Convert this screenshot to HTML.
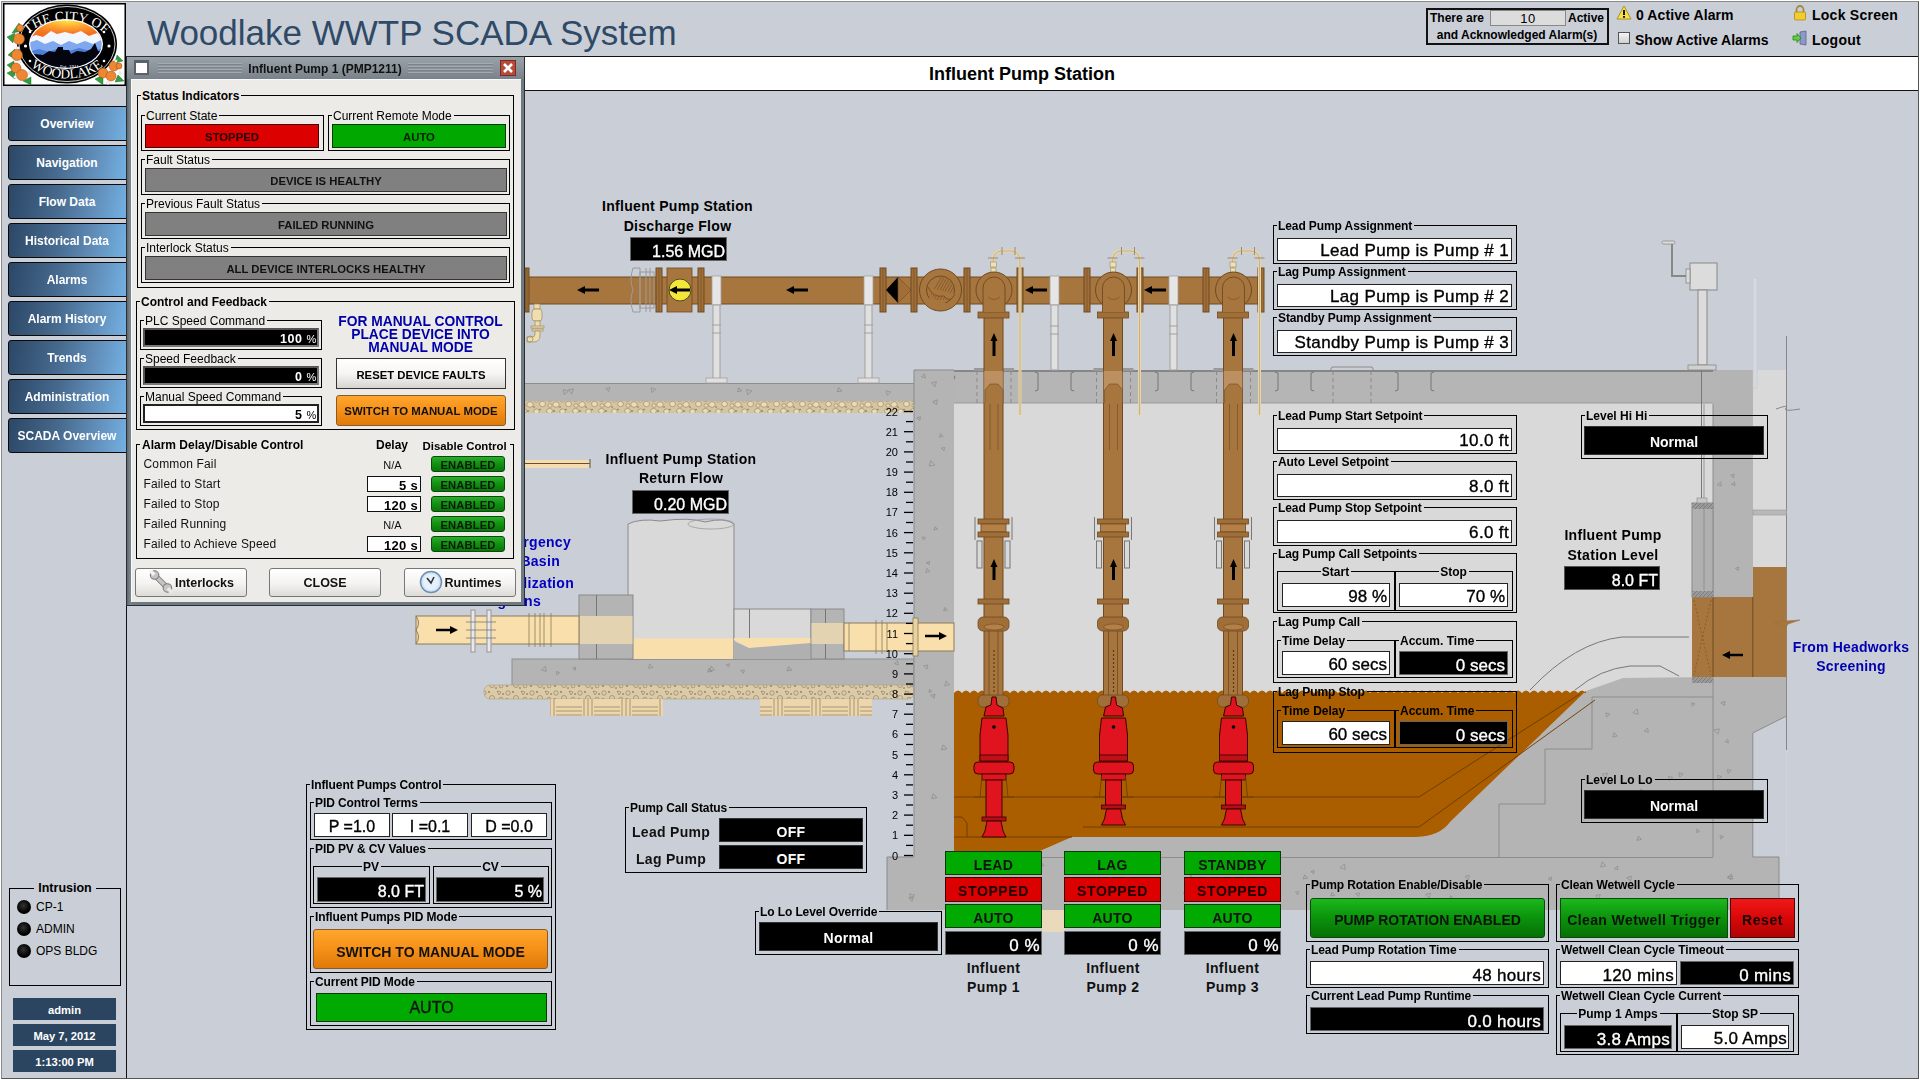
<!DOCTYPE html>
<html><head><meta charset="utf-8"><style>
html,body{margin:0;padding:0;}
body{width:1920px;height:1080px;position:relative;overflow:hidden;background:#ffffff;font-family:"Liberation Sans", sans-serif;}
.a{position:absolute;}
.t{position:absolute;white-space:pre;}
</style></head><body>
<div class="a" style="left:1px;top:1px;width:1918px;height:1078px;background:#CACFD7;box-sizing:border-box;border-left:1px solid #8a8a8a;border-top:1px solid #8a8a8a;border-right:1px solid #555;border-bottom:1px solid #555"></div><svg class="a" style="left:0;top:0" width="1920" height="1080" viewBox="0 0 1920 1080"><rect x="525" y="383" width="389" height="18" fill="#B4B4B4"/><line x1="525" y1="383.5" x2="914" y2="383.5" stroke="#8E8E8E" stroke-width="1"/><g fill="none" stroke="#7a7a7a" stroke-width="0.6" opacity="0.8"><polygon points="651.1,387.9 655.7,389.3 652.0,392.5" transform="rotate(0 651.1 387.9)"/><polygon points="838.6,387.6 843.1,388.9 839.5,392.0" transform="rotate(30 838.6 387.6)"/><polygon points="609.9,387.5 614.0,388.7 610.8,391.6" transform="rotate(90 609.9 387.5)"/><polygon points="563.2,389.5 568.3,391.1 564.2,394.6" transform="rotate(0 563.2 389.5)"/><polygon points="886.2,390.8 890.6,392.1 887.1,395.2" transform="rotate(0 886.2 390.8)"/><polygon points="746.6,389.4 752.0,391.0 747.7,394.8" transform="rotate(0 746.6 389.4)"/><polygon points="738.9,387.8 742.9,389.0 739.7,391.8" transform="rotate(30 738.9 387.8)"/><polygon points="573.4,388.9 578.4,390.4 574.4,393.9" transform="rotate(90 573.4 388.9)"/></g><defs><pattern id="grav" width="26" height="12" patternUnits="userSpaceOnUse"><rect width="26" height="12" fill="#D6C5A2"/><g fill="#EADBB9" stroke="#8f7f5e" stroke-width="0.6"><ellipse cx="3.5" cy="3" rx="3" ry="2.5"/><ellipse cx="10" cy="8.5" rx="3.2" ry="2.8"/><ellipse cx="16.5" cy="3.5" rx="2.8" ry="2.6"/><ellipse cx="22.5" cy="8" rx="3" ry="2.7"/><ellipse cx="4" cy="9.5" rx="2" ry="1.8"/></g><g fill="#6a5a40"><circle cx="8" cy="3" r="0.8"/><circle cx="20" cy="1.5" r="0.7"/><circle cx="14" cy="11" r="0.7"/></g></pattern><pattern id="grav2" width="24" height="13" patternUnits="userSpaceOnUse"><rect width="24" height="13" fill="#DCCBA9"/><g fill="none" stroke="#8a7a5a" stroke-width="0.6"><circle cx="4" cy="4" r="2.2"/><circle cx="12" cy="9" r="2.5"/><polygon points="17,2 21,3 19,6"/><circle cx="21" cy="10" r="1.8"/></g><g fill="#5a4a30"><circle cx="9" cy="3" r="0.8"/><circle cx="3" cy="10" r="0.8"/><circle cx="16" cy="12" r="0.7"/><circle cx="23" cy="5" r="0.7"/></g></pattern><pattern id="timb" width="38" height="18" patternUnits="userSpaceOnUse"><rect width="38" height="18" fill="#EBD6AE"/><g stroke="#9a8560" stroke-width="0.8"><line x1="0" y1="5" x2="12" y2="5"/><line x1="0" y1="9" x2="12" y2="9"/><line x1="0" y1="13" x2="12" y2="13"/><line x1="14" y1="0" x2="14" y2="18"/><line x1="18" y1="0" x2="18" y2="18"/><line x1="22" y1="0" x2="22" y2="18"/><line x1="24" y1="5" x2="38" y2="5"/><line x1="24" y1="9" x2="38" y2="9"/><line x1="24" y1="13" x2="38" y2="13"/></g></pattern><pattern id="hatch" width="4" height="4" patternUnits="userSpaceOnUse"><rect width="4" height="4" fill="#9a9a9a"/><path d="M0,4 L4,0" stroke="#666" stroke-width="0.6"/></pattern></defs><rect x="525" y="401" width="389" height="12" fill="url(#grav)"/><rect x="525" y="460" width="65" height="8" fill="#F3DDB0"/><line x1="525" y1="463.5" x2="590" y2="463.5" stroke="#6a5028" stroke-width="1.2"/><line x1="590" y1="459" x2="590" y2="468" stroke="#666" stroke-width="1.2"/><rect x="512" y="659" width="402" height="27" fill="#B4B4B4" stroke="#8E8E8E" stroke-width="1"/><g fill="none" stroke="#7a7a7a" stroke-width="0.6" opacity="0.8"><polygon points="556.2,671.6 559.7,672.6 556.9,675.0" transform="rotate(0 556.2 671.6)"/><polygon points="729.6,663.9 732.8,664.9 730.3,667.1" transform="rotate(90 729.6 663.9)"/><polygon points="709.6,671.0 714.5,672.5 710.6,675.9" transform="rotate(270 709.6 671.0)"/><polygon points="744.4,669.8 748.1,670.9 745.1,673.5" transform="rotate(90 744.4 669.8)"/><polygon points="788.6,666.7 793.0,668.0 789.5,671.1" transform="rotate(30 788.6 666.7)"/><polygon points="709.1,668.2 713.2,669.4 709.9,672.3" transform="rotate(30 709.1 668.2)"/><polygon points="898.3,664.8 902.3,666.0 899.1,668.8" transform="rotate(180 898.3 664.8)"/><polygon points="575.3,670.3 578.4,671.3 575.9,673.4" transform="rotate(200 575.3 670.3)"/><polygon points="546.3,671.4 551.2,672.9 547.3,676.3" transform="rotate(180 546.3 671.4)"/><polygon points="648.6,668.3 652.9,669.5 649.5,672.5" transform="rotate(270 648.6 668.3)"/></g><rect x="484" y="685" width="430" height="14" rx="6" fill="url(#grav2)" stroke="#b0a080" stroke-width="0.6"/><rect x="550" y="699" width="113" height="17" fill="url(#timb)"/><rect x="760" y="699" width="112" height="17" fill="url(#timb)"/><path d="M628,524 Q640,518 660,521 Q690,517 705,522 Q725,517 734,524 L734,659 L628,659 Z" fill="#D9D9D9" stroke="#8a8a8a" stroke-width="1"/><ellipse cx="711" cy="524" rx="23" ry="5" fill="none" stroke="#9a9a9a" stroke-width="0.8"/><rect x="628.5" y="638.5" width="105" height="20.5" fill="#F9DFAC"/><rect x="734" y="609" width="77" height="50" fill="#D9D9D9" stroke="#8a8a8a" stroke-width="1"/><line x1="749.5" y1="609" x2="749.5" y2="646" stroke="#777" stroke-width="1"/><polygon points="734,638 811,638 811,643 749,648 734,640" fill="#F9DFAC"/><polygon points="734,641 749,648 811,643 811,659 734,659" fill="#B0B0B0"/><rect x="579" y="595" width="54" height="64" fill="#B4B4B4" stroke="#8a8a8a" stroke-width="1"/><line x1="596.5" y1="595" x2="596.5" y2="659" stroke="#777" stroke-width="1"/><rect x="579.5" y="616" width="53" height="28" fill="#E4D3B0"/><rect x="811" y="609" width="33" height="50" fill="#B4B4B4" stroke="#8a8a8a" stroke-width="1"/><line x1="825.5" y1="609" x2="825.5" y2="659" stroke="#777" stroke-width="1"/><rect x="811.5" y="623" width="32" height="21" fill="#E4D3B0"/><rect x="416" y="616" width="163" height="28" fill="#F9DFAC" stroke="#8a7a5a" stroke-width="1"/><path d="M416,616 Q421,623 416,630 Q421,637 416,644" fill="none" stroke="#8a7a5a" stroke-width="1"/><g stroke="#a0a0a0" stroke-width="1.2" fill="#e8e8e8"><rect x="471" y="610" width="4" height="42"/><rect x="487" y="610" width="4" height="42"/></g><g stroke="#777" stroke-width="0.8"><line x1="466" y1="622" x2="496" y2="622"/><line x1="466" y1="630" x2="496" y2="630"/><line x1="466" y1="638" x2="496" y2="638"/></g><g stroke="#8a7a5a" stroke-width="0.8"><line x1="529" y1="613" x2="529" y2="647"/><line x1="535" y1="613" x2="535" y2="647"/><line x1="540" y1="613" x2="540" y2="647"/><line x1="544" y1="613" x2="544" y2="647"/><line x1="551" y1="613" x2="551" y2="647"/></g><line x1="436" y1="630" x2="450" y2="630" stroke="#000" stroke-width="2.5"/><polygon points="458,630 450,626 450,634" fill="#000"/><rect x="844" y="623" width="110" height="28" fill="#F9DFAC" stroke="#8a7a5a" stroke-width="1"/><g stroke="#8a7a5a" stroke-width="0.8"><line x1="849" y1="623" x2="849" y2="651"/><line x1="876" y1="620" x2="876" y2="654"/><line x1="882" y1="620" x2="882" y2="654"/><line x1="887" y1="623" x2="887" y2="651"/></g><rect x="954" y="403" width="759" height="454" fill="#D9D9D9"/><rect x="1752" y="370" width="35" height="487" fill="#D9D9D9"/><rect x="954" y="370" width="759" height="33" fill="#B5B5B5"/><line x1="954" y1="371" x2="1713" y2="371" stroke="#777" stroke-width="1.5"/><line x1="954" y1="403" x2="1713" y2="403" stroke="#999" stroke-width="1"/><g fill="none" stroke="#7a7a7a" stroke-width="0.6" opacity="0.8"></g><g fill="none" stroke="#777" stroke-width="1"><path d="M1035,372 L1038,373 L1038,390 L1035,391"/><path d="M1074,372 L1071,373 L1071,390 L1074,391"/><path d="M1155,372 L1158,373 L1158,390 L1155,391"/><path d="M1194,372 L1191,373 L1191,390 L1194,391"/><path d="M1275,372 L1278,373 L1278,390 L1275,391"/><path d="M1314,372 L1311,373 L1311,390 L1314,391"/><path d="M1395,372 L1398,373 L1398,390 L1395,391"/><path d="M1434,372 L1431,373 L1431,390 L1434,391"/><path d="M952,373 L955,377 L951,385 L945,381"/><path d="M1714,373 L1716,377 L1722,386 L1728,381"/></g><g stroke="#8a8a8a" stroke-width="1" stroke-dasharray="4,3"><line x1="977" y1="371" x2="977" y2="403"/><line x1="1011" y1="371" x2="1011" y2="403"/><line x1="1096.5" y1="371" x2="1096.5" y2="403"/><line x1="1130.5" y1="371" x2="1130.5" y2="403"/><line x1="1216.5" y1="371" x2="1216.5" y2="403"/><line x1="1250.5" y1="371" x2="1250.5" y2="403"/></g><g fill="#999"><rect x="974" y="368" width="40" height="3"/><rect x="1093.5" y="368" width="40" height="3"/><rect x="1213.5" y="368" width="40" height="3"/></g><g stroke="#8a8a8a" stroke-width="1" fill="none"><path d="M1330,371 L1332,367 L1372,367 L1374,371"/><line x1="1333" y1="371" x2="1333" y2="403" stroke-dasharray="4,3"/><line x1="1371" y1="371" x2="1371" y2="403" stroke-dasharray="4,3"/></g><polygon points="914,370 954,370 954,851 1040,851 1072,837 1416,837 1450,822 1586,691 1623,678 1713,677 1786.5,677 1786.5,716 1752.8,733 1752.8,857 1779,857 1779,910 887,910 887,857 914,857" fill="#B4B4B4"/><rect x="1713" y="370" width="40" height="227" fill="#B4B4B4"/><polyline points="914,857 914,370 954,370" fill="none" stroke="#8a8a8a" stroke-width="1"/><polyline points="887,910 887,857 914,857" fill="none" stroke="#8a8a8a" stroke-width="1"/><g fill="none" stroke="#7a7a7a" stroke-width="0.6" opacity="0.8"><polygon points="919.9,420.3 923.6,421.4 920.7,423.9" transform="rotate(200 919.9 420.3)"/><polygon points="936.6,404.7 941.3,406.1 937.5,409.5" transform="rotate(200 936.6 404.7)"/><polygon points="934.2,698.2 938.3,699.5 935.0,702.3" transform="rotate(200 934.2 698.2)"/><polygon points="928.8,692.3 931.9,693.2 929.4,695.3" transform="rotate(270 928.8 692.3)"/><polygon points="928.0,665.0 932.2,666.2 928.8,669.2" transform="rotate(90 928.0 665.0)"/><polygon points="939.5,437.2 943.1,438.3 940.2,440.8" transform="rotate(270 939.5 437.2)"/><polygon points="943.7,610.8 947.1,611.9 944.4,614.3" transform="rotate(270 943.7 610.8)"/><polygon points="933.4,793.8 938.4,795.4 934.4,798.9" transform="rotate(30 933.4 793.8)"/><polygon points="925.8,572.4 929.7,573.6 926.6,576.3" transform="rotate(270 925.8 572.4)"/><polygon points="944.8,447.4 948.3,448.4 945.5,450.8" transform="rotate(90 944.8 447.4)"/><polygon points="936.4,381.7 941.5,383.2 937.5,386.8" transform="rotate(90 936.4 381.7)"/><polygon points="925.4,377.9 929.4,379.2 926.2,382.0" transform="rotate(180 925.4 377.9)"/><polygon points="935.1,526.7 938.4,527.7 935.7,530.0" transform="rotate(30 935.1 526.7)"/><polygon points="944.6,685.8 949.5,687.3 945.6,690.6" transform="rotate(270 944.6 685.8)"/><polygon points="943.2,744.9 948.4,746.5 944.2,750.1" transform="rotate(30 943.2 744.9)"/><polygon points="929.0,564.7 932.2,565.7 929.6,568.0" transform="rotate(200 929.0 564.7)"/><polygon points="929.2,466.2 934.7,467.8 930.3,471.6" transform="rotate(270 929.2 466.2)"/><polygon points="922.5,536.8 925.7,537.8 923.2,540.0" transform="rotate(0 922.5 536.8)"/></g><g fill="none" stroke="#7a7a7a" stroke-width="0.6" opacity="0.8"><polygon points="1389.8,883.0 1395.1,884.6 1390.8,888.4" transform="rotate(30 1389.8 883.0)"/><polygon points="913.4,896.8 918.0,898.2 914.3,901.4" transform="rotate(90 913.4 896.8)"/><polygon points="1449.3,900.2 1453.8,901.5 1450.2,904.7" transform="rotate(270 1449.3 900.2)"/><polygon points="999.1,895.8 1004.6,897.5 1000.2,901.3" transform="rotate(270 999.1 895.8)"/><polygon points="1313.7,873.8 1317.1,874.8 1314.4,877.1" transform="rotate(200 1313.7 873.8)"/><polygon points="1192.5,871.9 1197.6,873.4 1193.5,876.9" transform="rotate(90 1192.5 871.9)"/><polygon points="1345.4,869.4 1350.8,871.0 1346.5,874.8" transform="rotate(180 1345.4 869.4)"/><polygon points="1020.0,883.3 1023.1,884.2 1020.6,886.3" transform="rotate(30 1020.0 883.3)"/><polygon points="1153.3,887.4 1156.5,888.3 1154.0,890.6" transform="rotate(180 1153.3 887.4)"/><polygon points="1347.2,898.2 1351.1,899.4 1348.0,902.1" transform="rotate(90 1347.2 898.2)"/><polygon points="1359.7,892.9 1363.5,894.1 1360.4,896.8" transform="rotate(90 1359.7 892.9)"/><polygon points="1430.6,893.3 1435.5,894.8 1431.6,898.2" transform="rotate(90 1430.6 893.3)"/><polygon points="1600.3,894.6 1605.2,896.0 1601.3,899.4" transform="rotate(90 1600.3 894.6)"/><polygon points="1066.9,881.2 1071.8,882.7 1067.9,886.0" transform="rotate(0 1066.9 881.2)"/><polygon points="1586.3,880.4 1589.8,881.4 1587.0,883.8" transform="rotate(30 1586.3 880.4)"/><polygon points="1732.7,879.3 1738.1,880.9 1733.8,884.7" transform="rotate(180 1732.7 879.3)"/><polygon points="1731.4,876.0 1735.0,877.0 1732.1,879.5" transform="rotate(90 1731.4 876.0)"/><polygon points="1304.7,874.8 1308.9,876.1 1305.5,879.1" transform="rotate(30 1304.7 874.8)"/><polygon points="1630.6,880.7 1635.2,882.0 1631.5,885.3" transform="rotate(200 1630.6 880.7)"/><polygon points="965.6,888.1 970.9,889.7 966.7,893.4" transform="rotate(200 965.6 888.1)"/><polygon points="1551.1,880.6 1554.6,881.6 1551.8,884.0" transform="rotate(200 1551.1 880.6)"/><polygon points="1183.6,893.8 1189.0,895.5 1184.7,899.3" transform="rotate(270 1183.6 893.8)"/><polygon points="1298.6,891.5 1301.8,892.4 1299.2,894.7" transform="rotate(90 1298.6 891.5)"/><polygon points="1040.6,866.2 1044.0,867.2 1041.3,869.6" transform="rotate(270 1040.6 866.2)"/><polygon points="1600.7,867.0 1605.8,868.5 1601.7,872.1" transform="rotate(270 1600.7 867.0)"/><polygon points="1469.4,875.4 1473.8,876.7 1470.3,879.7" transform="rotate(90 1469.4 875.4)"/><polygon points="909.8,893.8 914.6,895.2 910.8,898.6" transform="rotate(0 909.8 893.8)"/><polygon points="1354.4,899.3 1358.5,900.5 1355.2,903.4" transform="rotate(90 1354.4 899.3)"/><polygon points="1618.0,869.7 1621.6,870.7 1618.7,873.3" transform="rotate(180 1618.0 869.7)"/><polygon points="1332.0,892.3 1335.8,893.5 1332.8,896.1" transform="rotate(30 1332.0 892.3)"/></g><g fill="none" stroke="#7a7a7a" stroke-width="0.6" opacity="0.8"><polygon points="1638.2,714.3 1643.5,715.9 1639.2,719.6" transform="rotate(180 1638.2 714.3)"/><polygon points="1693.2,796.7 1698.3,798.2 1694.2,801.7" transform="rotate(30 1693.2 796.7)"/><polygon points="1638.4,836.2 1642.6,837.5 1639.2,840.5" transform="rotate(30 1638.4 836.2)"/><polygon points="1607.5,773.1 1612.6,774.7 1608.5,778.3" transform="rotate(90 1607.5 773.1)"/><polygon points="1660.0,814.3 1663.4,815.3 1660.7,817.7" transform="rotate(90 1660.0 814.3)"/><polygon points="1644.5,806.4 1648.8,807.7 1645.3,810.8" transform="rotate(180 1644.5 806.4)"/><polygon points="1668.5,776.3 1672.7,777.5 1669.3,780.5" transform="rotate(0 1668.5 776.3)"/><polygon points="1691.6,702.8 1695.0,703.9 1692.3,706.3" transform="rotate(0 1691.6 702.8)"/><polygon points="1678.8,772.7 1683.2,774.0 1679.7,777.1" transform="rotate(0 1678.8 772.7)"/><polygon points="1641.0,788.9 1645.2,790.2 1641.8,793.2" transform="rotate(30 1641.0 788.9)"/><polygon points="1612.9,737.0 1617.2,738.2 1613.8,741.2" transform="rotate(270 1612.9 737.0)"/><polygon points="1648.4,732.4 1652.7,733.7 1649.3,736.7" transform="rotate(180 1648.4 732.4)"/><polygon points="1696.1,832.4 1699.6,833.4 1696.8,835.9" transform="rotate(270 1696.1 832.4)"/><polygon points="1605.8,712.9 1609.9,714.1 1606.6,717.0" transform="rotate(0 1605.8 712.9)"/></g><g fill="none" stroke="#7a7a7a" stroke-width="0.6" opacity="0.8"><polygon points="1735.1,485.5 1738.7,486.6 1735.8,489.1" transform="rotate(180 1735.1 485.5)"/><polygon points="1738.2,570.4 1741.6,571.4 1738.8,573.7" transform="rotate(200 1738.2 570.4)"/><polygon points="1734.4,474.3 1738.0,475.4 1735.1,477.9" transform="rotate(90 1734.4 474.3)"/><polygon points="1743.1,447.7 1748.5,449.4 1744.2,453.1" transform="rotate(270 1743.1 447.7)"/><polygon points="1740.9,437.5 1745.6,438.9 1741.8,442.1" transform="rotate(90 1740.9 437.5)"/><polygon points="1721.4,486.1 1725.6,487.4 1722.2,490.4" transform="rotate(180 1721.4 486.1)"/></g><g fill="none" stroke="#7a7a7a" stroke-width="0.6" opacity="0.8"><polygon points="1728.4,742.8 1731.6,743.8 1729.0,746.1" transform="rotate(180 1728.4 742.8)"/><polygon points="1717.5,775.4 1721.6,776.6 1718.3,779.5" transform="rotate(0 1717.5 775.4)"/><polygon points="1727.4,769.4 1731.1,770.5 1728.1,773.1" transform="rotate(0 1727.4 769.4)"/><polygon points="1720.0,835.6 1723.6,836.6 1720.8,839.1" transform="rotate(0 1720.0 835.6)"/><polygon points="1719.3,728.9 1724.5,730.4 1720.3,734.1" transform="rotate(90 1719.3 728.9)"/><polygon points="1724.3,705.4 1728.4,706.6 1725.1,709.4" transform="rotate(200 1724.3 705.4)"/></g><polygon points="1752.8,733 1786.5,716 1786.5,857 1752.8,857" fill="#CACFD7"/><polyline points="1786.5,716 1752.8,733 1752.8,857 1779,857 1779,910" fill="none" stroke="#8a8a8a" stroke-width="1"/><line x1="1786.5" y1="336" x2="1786.5" y2="750" stroke="#888" stroke-width="1"/><rect x="1753" y="510" width="33.5" height="5" fill="#B8B8B8" stroke="#999" stroke-width="0.6"/><g fill="none" stroke="#8c8c8c" stroke-width="1"><polyline points="1040,857.5 1600,857.5 1713,857.5"/><polyline points="1499,857 1499,804 1545,804 1545,749 1592,749 1592,697 1713,697"/><line x1="1713" y1="404" x2="1713" y2="857"/></g><path d="M954,693 Q958,688 962,693 Q966,688 970,693 Q974,688 978,693 Q982,688 986,693 Q990,688 994,693 Q998,688 1002,693 Q1006,688 1010,693 Q1014,688 1018,693 Q1022,688 1026,693 Q1030,688 1034,693 Q1038,688 1042,693 Q1046,688 1050,693 Q1054,688 1058,693 Q1062,688 1066,693 Q1070,688 1074,693 Q1078,688 1082,693 Q1086,688 1090,693 Q1094,688 1098,693 Q1102,688 1106,693 Q1110,688 1114,693 Q1118,688 1122,693 Q1126,688 1130,693 Q1134,688 1138,693 Q1142,688 1146,693 Q1150,688 1154,693 Q1158,688 1162,693 Q1166,688 1170,693 Q1174,688 1178,693 Q1182,688 1186,693 Q1190,688 1194,693 Q1198,688 1202,693 Q1206,688 1210,693 Q1214,688 1218,693 Q1222,688 1226,693 Q1230,688 1234,693 Q1238,688 1242,693 Q1246,688 1250,693 Q1254,688 1258,693 Q1262,688 1266,693 Q1270,688 1274,693 Q1278,688 1282,693 Q1286,688 1290,693 Q1294,688 1298,693 Q1302,688 1306,693 Q1310,688 1314,693 Q1318,688 1322,693 Q1326,688 1330,693 Q1334,688 1338,693 Q1342,688 1346,693 Q1350,688 1354,693 Q1358,688 1362,693 Q1366,688 1370,693 Q1374,688 1378,693 Q1382,688 1386,693 Q1390,688 1394,693 Q1398,688 1402,693 Q1406,688 1410,693 Q1414,688 1418,693 Q1422,688 1426,693 Q1430,688 1434,693 Q1438,688 1442,693 Q1446,688 1450,693 Q1454,688 1458,693 Q1462,688 1466,693 Q1470,688 1474,693 Q1478,688 1482,693 Q1486,688 1490,693 Q1494,688 1498,693 Q1502,688 1506,693 Q1510,688 1514,693 Q1518,688 1522,693 Q1526,688 1530,693 Q1534,688 1538,693 Q1542,688 1546,693 Q1550,688 1554,693 Q1558,688 1562,693 Q1566,688 1570,693 Q1574,688 1578,693 Q1582,688 1586,693 L1586,691 L1450,822 Q1440,836 1416,837 L1072,837 L1040,851 L954,851 Z" fill="#AA5E00"/><g fill="none" stroke="#6a3a00" stroke-width="0.9"><polyline points="954,797 1419,797 1580,694"/><polyline points="1083,827 1419,827 1595,700"/><line x1="954" y1="837" x2="1072" y2="837"/><polyline points="954,817 962,817 967,823 967,837"/></g><g fill="none" stroke="#777" stroke-width="1"><path d="M1689,637 L1622,637 Q1575,642 1530,690"/><path d="M1679,676 L1660,666 L1630,666 Q1600,669 1575,690"/></g><g stroke="#000" stroke-width="1.3"><line x1="904" y1="855.5" x2="913" y2="855.5"/><line x1="906" y1="845.4" x2="913" y2="845.4"/><line x1="904" y1="835.3" x2="913" y2="835.3"/><line x1="906" y1="825.2" x2="913" y2="825.2"/><line x1="904" y1="815.1" x2="913" y2="815.1"/><line x1="906" y1="805.0" x2="913" y2="805.0"/><line x1="904" y1="795.0" x2="913" y2="795.0"/><line x1="906" y1="784.9" x2="913" y2="784.9"/><line x1="904" y1="774.8" x2="913" y2="774.8"/><line x1="906" y1="764.7" x2="913" y2="764.7"/><line x1="904" y1="754.6" x2="913" y2="754.6"/><line x1="906" y1="744.5" x2="913" y2="744.5"/><line x1="904" y1="734.4" x2="913" y2="734.4"/><line x1="906" y1="724.3" x2="913" y2="724.3"/><line x1="904" y1="714.2" x2="913" y2="714.2"/><line x1="906" y1="704.1" x2="913" y2="704.1"/><line x1="904" y1="694.1" x2="913" y2="694.1"/><line x1="906" y1="684.0" x2="913" y2="684.0"/><line x1="904" y1="673.9" x2="913" y2="673.9"/><line x1="906" y1="663.8" x2="913" y2="663.8"/><line x1="904" y1="653.7" x2="913" y2="653.7"/><line x1="906" y1="643.6" x2="913" y2="643.6"/><line x1="904" y1="633.5" x2="913" y2="633.5"/><line x1="906" y1="623.4" x2="913" y2="623.4"/><line x1="904" y1="613.3" x2="913" y2="613.3"/><line x1="906" y1="603.2" x2="913" y2="603.2"/><line x1="904" y1="593.2" x2="913" y2="593.2"/><line x1="906" y1="583.1" x2="913" y2="583.1"/><line x1="904" y1="573.0" x2="913" y2="573.0"/><line x1="906" y1="562.9" x2="913" y2="562.9"/><line x1="904" y1="552.8" x2="913" y2="552.8"/><line x1="906" y1="542.7" x2="913" y2="542.7"/><line x1="904" y1="532.6" x2="913" y2="532.6"/><line x1="906" y1="522.5" x2="913" y2="522.5"/><line x1="904" y1="512.4" x2="913" y2="512.4"/><line x1="906" y1="502.4" x2="913" y2="502.4"/><line x1="904" y1="492.3" x2="913" y2="492.3"/><line x1="906" y1="482.2" x2="913" y2="482.2"/><line x1="904" y1="472.1" x2="913" y2="472.1"/><line x1="906" y1="462.0" x2="913" y2="462.0"/><line x1="904" y1="451.9" x2="913" y2="451.9"/><line x1="906" y1="441.8" x2="913" y2="441.8"/><line x1="904" y1="431.7" x2="913" y2="431.7"/><line x1="906" y1="421.6" x2="913" y2="421.6"/><line x1="904" y1="411.5" x2="913" y2="411.5"/></g><g font-family="Liberation Sans" font-size="11" fill="#000" text-anchor="end"><text x="898" y="859.5">0</text><text x="898" y="839.3">1</text><text x="898" y="819.1">2</text><text x="898" y="799.0">3</text><text x="898" y="778.8">4</text><text x="898" y="758.6">5</text><text x="898" y="738.4">6</text><text x="898" y="718.2">7</text><text x="898" y="698.1">8</text><text x="898" y="677.9">9</text><text x="898" y="657.7">10</text><text x="898" y="637.5">11</text><text x="898" y="617.3">12</text><text x="898" y="597.2">13</text><text x="898" y="577.0">14</text><text x="898" y="556.8">15</text><text x="898" y="536.6">16</text><text x="898" y="516.4">17</text><text x="898" y="496.3">18</text><text x="898" y="476.1">19</text><text x="898" y="455.9">20</text><text x="898" y="435.7">21</text><text x="898" y="415.5">22</text></g><rect x="914" y="623" width="40" height="28" fill="#F9DFAC" stroke="#8a7a5a" stroke-width="1"/><rect x="913" y="618" width="5" height="38" fill="#E9D2A0" stroke="#8a7a5a" stroke-width="0.8"/><line x1="925" y1="636" x2="939" y2="636" stroke="#000" stroke-width="2.5"/><polygon points="947,636 939,632 939,640" fill="#000"/><polygon points="1692,597 1753,597 1753,567 1786.5,567 1786.5,677 1692,677" fill="#A7763E"/><polyline points="1713,597 1713,677" stroke="#6e4a22" stroke-width="1" fill="none"/><polyline points="1752.8,597 1752.8,677" stroke="#6e4a22" stroke-width="1" fill="none"/><path d="M1694,600 L1711,675 M1711,600 L1694,675" stroke="#6e4a22" stroke-width="0.6" stroke-dasharray="2,2"/><line x1="1743" y1="655" x2="1730" y2="655" stroke="#000" stroke-width="2.5"/><polygon points="1722,655 1730,651 1730,659" fill="#000"/><rect x="1692" y="503" width="21" height="94" fill="#B0B0B0" stroke="#8a8a8a" stroke-width="1"/><rect x="1692" y="503" width="21" height="6" fill="url(#hatch)"/><rect x="1692" y="591" width="21" height="6" fill="url(#hatch)"/><rect x="1692" y="677" width="21" height="6" fill="url(#hatch)"/><line x1="1701.5" y1="370" x2="1701.5" y2="503" stroke="#777" stroke-width="1"/><line x1="1704" y1="404" x2="1704" y2="590" stroke="#888" stroke-width="0.8"/><rect x="1697" y="498" width="10" height="5" fill="#C8C8C8" stroke="#888" stroke-width="0.6"/><path d="M1776,409 Q1790,404 1786,408 Q1782,412 1800,409" fill="none" stroke="#888" stroke-width="1"/><path d="M1774,622 L1800,620 L1788,624 L1786,627 Z" fill="#A7763E" stroke="#9a7040" stroke-width="0.6"/><rect x="1690" y="263" width="27" height="27" fill="#DCDCDC" stroke="#888" stroke-width="1"/><rect x="1686" y="269" width="4" height="14" fill="#DCDCDC" stroke="#888" stroke-width="0.8"/><polyline points="1686,276 1672,276 1672,243" fill="none" stroke="#888" stroke-width="2"/><rect x="1662" y="241" width="13" height="3" rx="1.5" fill="#ddd" stroke="#888" stroke-width="0.8"/><rect x="1698" y="290" width="9" height="75" fill="#DCDCDC" stroke="#888" stroke-width="1"/><rect x="1688" y="365" width="28" height="5" fill="#D0D0D0" stroke="#888" stroke-width="0.8"/><rect x="1753" y="278" width="4" height="110" fill="#D6D9DE" stroke="#C2C6CC" stroke-width="0.6"/><rect x="527" y="277" width="731" height="27" fill="#A7763E" stroke="#6E4A22" stroke-width="1"/><rect x="525" y="268" width="4" height="44" fill="#A06E38" stroke="#6E4A22" stroke-width="1"/><line x1="527.0" y1="268" x2="527.0" y2="312" stroke="#6E4A22" stroke-width="0.6"/><g fill="#F0DDB0" stroke="#9a8a60" stroke-width="0.7"><rect x="534" y="304" width="6" height="5"/><rect x="532" y="309" width="10" height="12" rx="3"/><rect x="535" y="321" width="5" height="6"/><rect x="531" y="326" width="13" height="2"/><rect x="532" y="329" width="11" height="2"/><path d="M535,331 L540,331 L540,336 Q540,342 533,342 L527,342 L527,337 L532,337 Q535,337 535,334 Z"/><circle cx="530" cy="339" r="3" fill="none"/></g><line x1="599" y1="290" x2="585" y2="290" stroke="#000" stroke-width="3"/><polygon points="577,290 585,286 585,294" fill="#000"/><g fill="none" stroke="#9a9a9a" stroke-width="1"><path d="M633,268 L640,268 L640,312 L633,312 Q629,300 633,290 Q629,280 633,268"/><rect x="640" y="272" width="14" height="36"/><line x1="646" y1="268" x2="646" y2="312"/><line x1="650" y1="268" x2="650" y2="312"/></g><rect x="656" y="268" width="6" height="44" fill="#A06E38" stroke="#6E4A22" stroke-width="1"/><line x1="659.0" y1="268" x2="659.0" y2="312" stroke="#6E4A22" stroke-width="0.6"/><rect x="667" y="268" width="25" height="44" fill="#A7763E" stroke="#6E4A22" stroke-width="0.8"/><circle cx="680" cy="290" r="11" fill="#F4E63A" stroke="#4a4a20" stroke-width="1"/><line x1="690" y1="290" x2="677" y2="290" stroke="#000" stroke-width="3"/><polygon points="669,290 677,286 677,294" fill="#000"/><rect x="698" y="268" width="6" height="44" fill="#A06E38" stroke="#6E4A22" stroke-width="1"/><line x1="701.0" y1="268" x2="701.0" y2="312" stroke="#6E4A22" stroke-width="0.6"/><rect x="712" y="276" width="9" height="29" fill="#E6E6E6" stroke="#a0a0a0" stroke-width="0.8"/><rect x="713" y="305" width="7" height="74" fill="#E0E0E0" stroke="#a0a0a0" stroke-width="1"/><line x1="712" y1="325" x2="721" y2="325" stroke="#a0a0a0"/><line x1="712" y1="333" x2="721" y2="333" stroke="#a0a0a0"/><rect x="706" y="378" width="21" height="5" fill="#E0E0E0" stroke="#a0a0a0" stroke-width="0.8"/><rect x="864" y="276" width="9" height="29" fill="#E6E6E6" stroke="#a0a0a0" stroke-width="0.8"/><rect x="865" y="305" width="7" height="74" fill="#E0E0E0" stroke="#a0a0a0" stroke-width="1"/><line x1="864" y1="325" x2="873" y2="325" stroke="#a0a0a0"/><line x1="864" y1="333" x2="873" y2="333" stroke="#a0a0a0"/><rect x="858" y="378" width="21" height="5" fill="#E0E0E0" stroke="#a0a0a0" stroke-width="0.8"/><rect x="1050" y="276" width="9" height="29" fill="#E6E6E6" stroke="#a0a0a0" stroke-width="0.8"/><rect x="1051" y="305" width="7" height="65" fill="#E0E0E0" stroke="#a0a0a0" stroke-width="1"/><line x1="1050" y1="326" x2="1059" y2="326" stroke="#a0a0a0"/><line x1="1050" y1="334" x2="1059" y2="334" stroke="#a0a0a0"/><rect x="1169" y="276" width="9" height="29" fill="#E6E6E6" stroke="#a0a0a0" stroke-width="0.8"/><rect x="1170" y="305" width="7" height="65" fill="#E0E0E0" stroke="#a0a0a0" stroke-width="1"/><line x1="1169" y1="326" x2="1178" y2="326" stroke="#a0a0a0"/><line x1="1169" y1="334" x2="1178" y2="334" stroke="#a0a0a0"/><line x1="808" y1="290" x2="794" y2="290" stroke="#000" stroke-width="3"/><polygon points="786,290 794,286 794,294" fill="#000"/><rect x="880" y="268" width="6" height="44" fill="#A06E38" stroke="#6E4A22" stroke-width="1"/><line x1="883.0" y1="268" x2="883.0" y2="312" stroke="#6E4A22" stroke-width="0.6"/><polygon points="886,290 898,277 898,303" fill="#000"/><polygon points="898,277 911,290 898,303" fill="#A06E38" stroke="#6E4A22" stroke-width="0.6"/><rect x="911" y="268" width="6" height="44" fill="#A06E38" stroke="#6E4A22" stroke-width="1"/><line x1="914.0" y1="268" x2="914.0" y2="312" stroke="#6E4A22" stroke-width="0.6"/><circle cx="940.5" cy="290" r="21" fill="#A7763E" stroke="#6E4A22" stroke-width="1"/><circle cx="940.5" cy="290" r="14" fill="#A7763E" stroke="#6E4A22" stroke-width="1"/><clipPath id="pv"><circle cx="940.5" cy="290" r="13"/></clipPath><g clip-path="url(#pv)" stroke="#6E4A22" stroke-width="0.6"><line x1="928" y1="300" x2="942" y2="276"/><line x1="931" y1="300" x2="945" y2="276"/><line x1="934" y1="300" x2="948" y2="276"/><line x1="937" y1="300" x2="951" y2="276"/><line x1="940" y1="300" x2="954" y2="276"/><line x1="943" y1="300" x2="957" y2="276"/><line x1="946" y1="300" x2="960" y2="276"/></g><path d="M928,287 Q933,298 944,296 Q950,304 955,294" fill="#A7763E" stroke="#6E4A22" stroke-width="0.8"/><path d="M929,292 Q936,304 948,303 L950,306 L930,306 Z" fill="#A7763E"/><rect x="964" y="268" width="6" height="44" fill="#A06E38" stroke="#6E4A22" stroke-width="1"/><line x1="967.0" y1="268" x2="967.0" y2="312" stroke="#6E4A22" stroke-width="0.6"/><rect x="1203" y="268" width="6" height="44" fill="#A06E38" stroke="#6E4A22" stroke-width="1"/><line x1="1206.0" y1="268" x2="1206.0" y2="312" stroke="#6E4A22" stroke-width="0.6"/><rect x="1084" y="268" width="6" height="44" fill="#A06E38" stroke="#6E4A22" stroke-width="1"/><line x1="1087.0" y1="268" x2="1087.0" y2="312" stroke="#6E4A22" stroke-width="0.6"/><rect x="1017" y="268" width="6" height="44" fill="#A06E38" stroke="#6E4A22" stroke-width="1"/><line x1="1020.0" y1="268" x2="1020.0" y2="312" stroke="#6E4A22" stroke-width="0.6"/><rect x="1137" y="268" width="6" height="44" fill="#A06E38" stroke="#6E4A22" stroke-width="1"/><line x1="1140.0" y1="268" x2="1140.0" y2="312" stroke="#6E4A22" stroke-width="0.6"/><rect x="1258" y="268" width="6" height="44" fill="#A06E38" stroke="#6E4A22" stroke-width="1"/><line x1="1261.0" y1="268" x2="1261.0" y2="312" stroke="#6E4A22" stroke-width="0.6"/><line x1="1047" y1="290" x2="1033" y2="290" stroke="#000" stroke-width="3"/><polygon points="1025,290 1033,286 1033,294" fill="#000"/><line x1="1166" y1="290" x2="1152" y2="290" stroke="#000" stroke-width="3"/><polygon points="1144,290 1152,286 1152,294" fill="#000"/><path d="M993,285 L993,262 Q993,251 1002,251 L1011,251 Q1020,251 1020,262 L1020,415" fill="none" stroke="#E8D5A8" stroke-width="3"/><path d="M993,285 L993,262 Q993,251 1002,251 L1011,251 Q1020,251 1020,262 L1020,415" fill="none" stroke="#B09A6A" stroke-width="0.6"/><g stroke="#9a8a6a" stroke-width="1"><line x1="1002" y1="247" x2="1002" y2="255"/><line x1="1015" y1="247" x2="1015" y2="255"/><line x1="988" y1="258" x2="998" y2="258"/><line x1="1015" y1="258" x2="1025" y2="258"/></g><g fill="#EFE0B8" stroke="#9a8a60" stroke-width="0.6"><rect x="990.5" y="262" width="6" height="5"/><rect x="991" y="268" width="5" height="5"/><rect x="990" y="274" width="7" height="5"/></g><rect x="984" y="304" width="19" height="400" fill="#A7763E" stroke="#6E4A22" stroke-width="1"/><rect x="978" y="312" width="31" height="6" fill="#A06E38" stroke="#6E4A22" stroke-width="0.8"/><circle cx="994" cy="290" r="18" fill="#A7763E" stroke="#6E4A22" stroke-width="1"/><path d="M983,312 L983,288 A11,11 0 0 1 1005,288 L1005,312" fill="#A7763E" stroke="#6E4A22" stroke-width="0.9"/><path d="M988,297 Q994,302 1000,297" fill="none" stroke="#6E4A22" stroke-width="0.6"/><line x1="994" y1="356" x2="994" y2="341" stroke="#000" stroke-width="3"/><polygon points="994,333 990.5,341 997.5,341" fill="#000"/><rect x="984" y="371" width="19" height="32" fill="#C9A27A" opacity="0.6"/><path d="M985,403 L985,390 L990,384 L998,384 L1003,390 L1003,403" fill="#A7763E" stroke="#6E4A22" stroke-width="0.6"/><line x1="990" y1="404" x2="990" y2="450" stroke="#6E4A22" stroke-width="0.6"/><line x1="998" y1="404" x2="998" y2="450" stroke="#6E4A22" stroke-width="0.6"/><g stroke="#777" stroke-width="1" fill="none"><line x1="975" y1="517" x2="975" y2="540"/><line x1="1012" y1="517" x2="1012" y2="540"/><rect x="977" y="541" width="5" height="27"/><rect x="1005" y="541" width="5" height="27"/></g><rect x="978" y="519" width="31" height="5" fill="#A06E38" stroke="#6E4A22" stroke-width="0.8"/><rect x="981" y="524" width="25" height="8" fill="#B58048" stroke="#6E4A22" stroke-width="0.8"/><rect x="978" y="532" width="31" height="5" fill="#A06E38" stroke="#6E4A22" stroke-width="0.8"/><line x1="994" y1="580" x2="994" y2="567" stroke="#000" stroke-width="3"/><polygon points="994,559 990.5,567 997.5,567" fill="#000"/><rect x="978" y="599" width="31" height="5" fill="#A06E38" stroke="#6E4A22" stroke-width="0.8"/><rect x="978" y="617" width="31" height="14" rx="5" fill="#A06E38" stroke="#6E4A22" stroke-width="0.8"/><ellipse cx="994" cy="627" rx="10" ry="3" fill="#B58048" stroke="#6E4A22" stroke-width="0.6"/><line x1="989" y1="631" x2="989" y2="700" stroke="#6E4A22" stroke-width="0.8"/><line x1="998" y1="631" x2="998" y2="700" stroke="#6E4A22" stroke-width="0.8"/><line x1="994" y1="650" x2="994" y2="692" stroke="#5a3a1a" stroke-width="1.2" stroke-dasharray="2,2"/><rect x="978" y="695" width="31" height="12" rx="5" fill="#A06E38" stroke="#6E4A22" stroke-width="0.8"/><path d="M984,716 L986,707 L991,705 L992,697 L996,697 L997,705 L1003,708 L1004,716 Z" fill="#E0141E" stroke="#3a0000" stroke-width="1"/><path d="M982,718 L1006,718 L1008,735 L1008,761 L980,761 L980,735 Z" fill="#E0141E" stroke="#3a0000" stroke-width="1"/><rect x="980" y="755" width="28" height="6" fill="#C01018" stroke="#3a0000" stroke-width="0.8"/><rect x="974" y="762" width="40" height="12" rx="4" fill="#E0141E" stroke="#3a0000" stroke-width="1"/><rect x="982" y="774" width="24" height="6" fill="#E0141E" stroke="#3a0000" stroke-width="0.8"/><rect x="986" y="780" width="16" height="38" fill="#E0141E" stroke="#3a0000" stroke-width="1"/><rect x="982" y="817" width="24" height="4" fill="#B01018" stroke="#3a0000" stroke-width="0.8"/><path d="M987,821 L1001,821 L1003,831 L1006,837 L982,837 L985,831 Z" fill="#E0141E" stroke="#3a0000" stroke-width="1"/><circle cx="994" cy="727" r="1.8" fill="#000"/><g fill="none" stroke="#6a3a00" stroke-width="0.8"><path d="M980,797 L982,776 M1008,797 L1006,776 M974,797 L986,797 M1002,797 L1014,797"/></g><path d="M1112.5,285 L1112.5,262 Q1112.5,251 1121.5,251 L1130.5,251 Q1139.5,251 1139.5,262 L1139.5,415" fill="none" stroke="#E8D5A8" stroke-width="3"/><path d="M1112.5,285 L1112.5,262 Q1112.5,251 1121.5,251 L1130.5,251 Q1139.5,251 1139.5,262 L1139.5,415" fill="none" stroke="#B09A6A" stroke-width="0.6"/><g stroke="#9a8a6a" stroke-width="1"><line x1="1121.5" y1="247" x2="1121.5" y2="255"/><line x1="1134.5" y1="247" x2="1134.5" y2="255"/><line x1="1107.5" y1="258" x2="1117.5" y2="258"/><line x1="1134.5" y1="258" x2="1144.5" y2="258"/></g><g fill="#EFE0B8" stroke="#9a8a60" stroke-width="0.6"><rect x="1110.0" y="262" width="6" height="5"/><rect x="1110.5" y="268" width="5" height="5"/><rect x="1109.5" y="274" width="7" height="5"/></g><rect x="1103.5" y="304" width="19" height="400" fill="#A7763E" stroke="#6E4A22" stroke-width="1"/><rect x="1097.5" y="312" width="31" height="6" fill="#A06E38" stroke="#6E4A22" stroke-width="0.8"/><circle cx="1113.5" cy="290" r="18" fill="#A7763E" stroke="#6E4A22" stroke-width="1"/><path d="M1102.5,312 L1102.5,288 A11,11 0 0 1 1124.5,288 L1124.5,312" fill="#A7763E" stroke="#6E4A22" stroke-width="0.9"/><path d="M1107.5,297 Q1113.5,302 1119.5,297" fill="none" stroke="#6E4A22" stroke-width="0.6"/><line x1="1113.5" y1="356" x2="1113.5" y2="341" stroke="#000" stroke-width="3"/><polygon points="1113.5,333 1110.0,341 1117.0,341" fill="#000"/><rect x="1103.5" y="371" width="19" height="32" fill="#C9A27A" opacity="0.6"/><path d="M1104.5,403 L1104.5,390 L1109.5,384 L1117.5,384 L1122.5,390 L1122.5,403" fill="#A7763E" stroke="#6E4A22" stroke-width="0.6"/><line x1="1109.5" y1="404" x2="1109.5" y2="450" stroke="#6E4A22" stroke-width="0.6"/><line x1="1117.5" y1="404" x2="1117.5" y2="450" stroke="#6E4A22" stroke-width="0.6"/><g stroke="#777" stroke-width="1" fill="none"><line x1="1094.5" y1="517" x2="1094.5" y2="540"/><line x1="1131.5" y1="517" x2="1131.5" y2="540"/><rect x="1096.5" y="541" width="5" height="27"/><rect x="1124.5" y="541" width="5" height="27"/></g><rect x="1097.5" y="519" width="31" height="5" fill="#A06E38" stroke="#6E4A22" stroke-width="0.8"/><rect x="1100.5" y="524" width="25" height="8" fill="#B58048" stroke="#6E4A22" stroke-width="0.8"/><rect x="1097.5" y="532" width="31" height="5" fill="#A06E38" stroke="#6E4A22" stroke-width="0.8"/><line x1="1113.5" y1="580" x2="1113.5" y2="567" stroke="#000" stroke-width="3"/><polygon points="1113.5,559 1110.0,567 1117.0,567" fill="#000"/><rect x="1097.5" y="599" width="31" height="5" fill="#A06E38" stroke="#6E4A22" stroke-width="0.8"/><rect x="1097.5" y="617" width="31" height="14" rx="5" fill="#A06E38" stroke="#6E4A22" stroke-width="0.8"/><ellipse cx="1113.5" cy="627" rx="10" ry="3" fill="#B58048" stroke="#6E4A22" stroke-width="0.6"/><line x1="1108.5" y1="631" x2="1108.5" y2="700" stroke="#6E4A22" stroke-width="0.8"/><line x1="1117.5" y1="631" x2="1117.5" y2="700" stroke="#6E4A22" stroke-width="0.8"/><line x1="1113.5" y1="650" x2="1113.5" y2="692" stroke="#5a3a1a" stroke-width="1.2" stroke-dasharray="2,2"/><rect x="1097.5" y="695" width="31" height="12" rx="5" fill="#A06E38" stroke="#6E4A22" stroke-width="0.8"/><path d="M1103.5,716 L1105.5,707 L1110.5,705 L1111.5,697 L1115.5,697 L1116.5,705 L1122.5,708 L1123.5,716 Z" fill="#E0141E" stroke="#3a0000" stroke-width="1"/><path d="M1101.5,718 L1125.5,718 L1127.5,735 L1127.5,761 L1099.5,761 L1099.5,735 Z" fill="#E0141E" stroke="#3a0000" stroke-width="1"/><rect x="1099.5" y="755" width="28" height="6" fill="#C01018" stroke="#3a0000" stroke-width="0.8"/><rect x="1093.5" y="762" width="40" height="12" rx="4" fill="#E0141E" stroke="#3a0000" stroke-width="1"/><rect x="1101.5" y="774" width="24" height="6" fill="#E0141E" stroke="#3a0000" stroke-width="0.8"/><rect x="1105.5" y="780" width="16" height="26" fill="#E0141E" stroke="#3a0000" stroke-width="1"/><rect x="1101.5" y="805" width="24" height="4" fill="#B01018" stroke="#3a0000" stroke-width="0.8"/><path d="M1106.5,809 L1120.5,809 L1122.5,819 L1125.5,825 L1101.5,825 L1104.5,819 Z" fill="#E0141E" stroke="#3a0000" stroke-width="1"/><circle cx="1113.5" cy="727" r="1.8" fill="#000"/><g fill="none" stroke="#6a3a00" stroke-width="0.8"><path d="M1099.5,797 L1101.5,776 M1127.5,797 L1125.5,776 M1093.5,797 L1105.5,797 M1121.5,797 L1133.5,797"/></g><path d="M1232.5,285 L1232.5,262 Q1232.5,251 1241.5,251 L1250.5,251 Q1259.5,251 1259.5,262 L1259.5,415" fill="none" stroke="#E8D5A8" stroke-width="3"/><path d="M1232.5,285 L1232.5,262 Q1232.5,251 1241.5,251 L1250.5,251 Q1259.5,251 1259.5,262 L1259.5,415" fill="none" stroke="#B09A6A" stroke-width="0.6"/><g stroke="#9a8a6a" stroke-width="1"><line x1="1241.5" y1="247" x2="1241.5" y2="255"/><line x1="1254.5" y1="247" x2="1254.5" y2="255"/><line x1="1227.5" y1="258" x2="1237.5" y2="258"/><line x1="1254.5" y1="258" x2="1264.5" y2="258"/></g><g fill="#EFE0B8" stroke="#9a8a60" stroke-width="0.6"><rect x="1230.0" y="262" width="6" height="5"/><rect x="1230.5" y="268" width="5" height="5"/><rect x="1229.5" y="274" width="7" height="5"/></g><rect x="1223.5" y="304" width="19" height="400" fill="#A7763E" stroke="#6E4A22" stroke-width="1"/><rect x="1217.5" y="312" width="31" height="6" fill="#A06E38" stroke="#6E4A22" stroke-width="0.8"/><circle cx="1233.5" cy="290" r="18" fill="#A7763E" stroke="#6E4A22" stroke-width="1"/><path d="M1222.5,312 L1222.5,288 A11,11 0 0 1 1244.5,288 L1244.5,312" fill="#A7763E" stroke="#6E4A22" stroke-width="0.9"/><path d="M1227.5,297 Q1233.5,302 1239.5,297" fill="none" stroke="#6E4A22" stroke-width="0.6"/><line x1="1233.5" y1="356" x2="1233.5" y2="341" stroke="#000" stroke-width="3"/><polygon points="1233.5,333 1230.0,341 1237.0,341" fill="#000"/><rect x="1223.5" y="371" width="19" height="32" fill="#C9A27A" opacity="0.6"/><path d="M1224.5,403 L1224.5,390 L1229.5,384 L1237.5,384 L1242.5,390 L1242.5,403" fill="#A7763E" stroke="#6E4A22" stroke-width="0.6"/><line x1="1229.5" y1="404" x2="1229.5" y2="450" stroke="#6E4A22" stroke-width="0.6"/><line x1="1237.5" y1="404" x2="1237.5" y2="450" stroke="#6E4A22" stroke-width="0.6"/><g stroke="#777" stroke-width="1" fill="none"><line x1="1214.5" y1="517" x2="1214.5" y2="540"/><line x1="1251.5" y1="517" x2="1251.5" y2="540"/><rect x="1216.5" y="541" width="5" height="27"/><rect x="1244.5" y="541" width="5" height="27"/></g><rect x="1217.5" y="519" width="31" height="5" fill="#A06E38" stroke="#6E4A22" stroke-width="0.8"/><rect x="1220.5" y="524" width="25" height="8" fill="#B58048" stroke="#6E4A22" stroke-width="0.8"/><rect x="1217.5" y="532" width="31" height="5" fill="#A06E38" stroke="#6E4A22" stroke-width="0.8"/><line x1="1233.5" y1="580" x2="1233.5" y2="567" stroke="#000" stroke-width="3"/><polygon points="1233.5,559 1230.0,567 1237.0,567" fill="#000"/><rect x="1217.5" y="599" width="31" height="5" fill="#A06E38" stroke="#6E4A22" stroke-width="0.8"/><rect x="1217.5" y="617" width="31" height="14" rx="5" fill="#A06E38" stroke="#6E4A22" stroke-width="0.8"/><ellipse cx="1233.5" cy="627" rx="10" ry="3" fill="#B58048" stroke="#6E4A22" stroke-width="0.6"/><line x1="1228.5" y1="631" x2="1228.5" y2="700" stroke="#6E4A22" stroke-width="0.8"/><line x1="1237.5" y1="631" x2="1237.5" y2="700" stroke="#6E4A22" stroke-width="0.8"/><line x1="1233.5" y1="650" x2="1233.5" y2="692" stroke="#5a3a1a" stroke-width="1.2" stroke-dasharray="2,2"/><rect x="1217.5" y="695" width="31" height="12" rx="5" fill="#A06E38" stroke="#6E4A22" stroke-width="0.8"/><path d="M1223.5,716 L1225.5,707 L1230.5,705 L1231.5,697 L1235.5,697 L1236.5,705 L1242.5,708 L1243.5,716 Z" fill="#E0141E" stroke="#3a0000" stroke-width="1"/><path d="M1221.5,718 L1245.5,718 L1247.5,735 L1247.5,761 L1219.5,761 L1219.5,735 Z" fill="#E0141E" stroke="#3a0000" stroke-width="1"/><rect x="1219.5" y="755" width="28" height="6" fill="#C01018" stroke="#3a0000" stroke-width="0.8"/><rect x="1213.5" y="762" width="40" height="12" rx="4" fill="#E0141E" stroke="#3a0000" stroke-width="1"/><rect x="1221.5" y="774" width="24" height="6" fill="#E0141E" stroke="#3a0000" stroke-width="0.8"/><rect x="1225.5" y="780" width="16" height="26" fill="#E0141E" stroke="#3a0000" stroke-width="1"/><rect x="1221.5" y="805" width="24" height="4" fill="#B01018" stroke="#3a0000" stroke-width="0.8"/><path d="M1226.5,809 L1240.5,809 L1242.5,819 L1245.5,825 L1221.5,825 L1224.5,819 Z" fill="#E0141E" stroke="#3a0000" stroke-width="1"/><circle cx="1233.5" cy="727" r="1.8" fill="#000"/><g fill="none" stroke="#6a3a00" stroke-width="0.8"><path d="M1219.5,797 L1221.5,776 M1247.5,797 L1245.5,776 M1213.5,797 L1225.5,797 M1241.5,797 L1253.5,797"/></g><rect x="1042" y="910" width="23" height="22" fill="#EBD9BC"/></svg><svg class="a" style="left:3px;top:3px" width="123" height="83" viewBox="0 0 123 83">
<rect x="0.75" y="0.75" width="121.5" height="81.5" fill="#fff" stroke="#000" stroke-width="1.5"/>
<ellipse cx="64" cy="41" rx="50" ry="39.5" fill="#000"/>
<ellipse cx="64" cy="41" rx="48" ry="37.5" fill="none" stroke="#fff" stroke-width="0.8"/>
<ellipse cx="63" cy="41" rx="37" ry="25" fill="#fff"/>
<defs><radialGradient id="sun" cx="0.5" cy="0.15" r="0.6"><stop offset="0" stop-color="#FFE040"/><stop offset="0.5" stop-color="#FFA030"/><stop offset="1" stop-color="#F27020"/></radialGradient></defs>
<clipPath id="lc"><ellipse cx="63" cy="41" rx="35.8" ry="23.8"/></clipPath>
<g clip-path="url(#lc)">
<rect x="25" y="15" width="80" height="22" fill="url(#sun)"/>
<polygon points="25,35 33,32 40,34 48,28 54,31 62,29 70,31 78,28 86,33 94,30 102,34 105,36 105,50 25,50" fill="#F2F6FF"/>
<polygon points="25,40 34,37 42,41 50,38 58,42 66,38 74,41 82,38 90,41 98,37 105,40 105,56 25,56" fill="#7FA8EE"/>
<polygon points="25,49 36,46 46,49 56,45 66,48 76,45 88,48 105,44 105,70 25,70" fill="#4E7FD8"/>
<polygon points="25,54 32,51 40,52 46,48 52,49 55,44 60,44 60,47 66,47 68,51 74,48 82,49 88,46 92,40 95,48 105,50 105,70 25,70" fill="#050510"/>
</g>
<path id="arcT" d="M19,45 A44.5,27.5 0 0 1 108,45" fill="none"/>
<path id="arcB" d="M17,41 A47,34.5 0 0 0 111,41" fill="none"/>
<text font-family="Liberation Serif" font-size="13.5" fill="#fff" letter-spacing="0.2"><textPath href="#arcT" startOffset="50%" text-anchor="middle">THE CITY OF</textPath></text>
<text font-family="Liberation Serif" font-size="13.5" fill="#fff" letter-spacing="0"><textPath href="#arcB" startOffset="50%" text-anchor="middle">WOODLAKE</textPath></text>
<text x="57" y="65" font-family="Liberation Serif" font-size="5" fill="#fff">Est. 1911</text>
<g fill="#fff"><circle cx="27" cy="29" r="1.3"/><circle cx="22.5" cy="43" r="1.6"/><circle cx="27" cy="58" r="1.3"/><circle cx="101" cy="29" r="1.3"/><circle cx="106" cy="43" r="1.6"/><circle cx="101" cy="58" r="1.3"/></g>
<g fill="#2E9E3E" stroke="#1a5a20" stroke-width="0.4">
<path d="M9,30 L16,20 L20,28 Z"/><path d="M4,34 L12,30 L10,40 Z"/><path d="M5,52 L12,46 L12,56 Z"/><path d="M4,62 L11,58 L11,68 Z"/><path d="M4,70 L12,66 L12,76 Z"/><path d="M20,78 L28,74 L28,82 Z"/>
<path d="M114,52 L120,58 L112,60 Z"/><path d="M115,72 L121,78 L112,79 Z"/><path d="M92,76 L100,72 L100,82 Z"/>
</g>
<g fill="#EE8632" stroke="#9a4a10" stroke-width="0.5">
<circle cx="17" cy="25" r="3.5"/><circle cx="16" cy="36" r="5.5"/><circle cx="14" cy="52" r="5.5"/><circle cx="13" cy="65" r="5"/><circle cx="19" cy="72" r="5.5"/>
<circle cx="111" cy="63" r="5"/><circle cx="100" cy="70" r="5"/><circle cx="108" cy="73" r="5"/><circle cx="116" cy="63" r="3"/>
</g>
<g fill="#fff" stroke="#999" stroke-width="0.3"><circle cx="15" cy="45" r="1.5"/><circle cx="16" cy="59" r="1.5"/><circle cx="12" cy="74" r="1.5"/><circle cx="26" cy="70" r="1.3"/><circle cx="113" cy="58" r="1.3"/><circle cx="105" cy="80" r="1.5"/><circle cx="117" cy="70" r="1.3"/></g>
</svg><div class="t" style="left:147px;top:12.55px;font-size:35px;line-height:40.25px;font-weight:normal;color:#2F4A66;text-align:left;">Woodlake WWTP SCADA System</div><div class="a" style="left:1426px;top:8px;width:183px;height:37px;box-sizing:border-box;border:2px solid #111"></div><div class="a" style="left:1490px;top:10px;width:76px;height:16px;background:#DCDCDC;box-sizing:border-box;border:1px solid #888"></div><div class="t" style="left:1430px;top:12.44px;font-size:12px;line-height:13.80px;font-weight:bold;color:#000;text-align:left;">There are</div><div class="t" style="left:928px;width:1200px;top:12.02px;font-size:13px;line-height:14.95px;font-weight:normal;color:#000;text-align:center;letter-spacing:0.5px;">10</div><div class="t" style="left:1004px;width:600px;top:12.44px;font-size:12px;line-height:13.80px;font-weight:bold;color:#000;text-align:right;">Active</div><div class="t" style="left:917px;width:1200px;top:29.44px;font-size:12px;line-height:13.80px;font-weight:bold;color:#000;text-align:center;">and Acknowledged Alarm(s)</div><svg class="a" style="left:1616px;top:5px" width="16" height="15" viewBox="0 0 16 15">
<polygon points="8,1 15,14 1,14" fill="#F6E24A" stroke="#B09020" stroke-width="1" stroke-linejoin="round"/>
<rect x="7.1" y="5" width="1.8" height="5" fill="#000"/><rect x="7.1" y="11" width="1.8" height="1.8" fill="#000"/></svg><div class="t" style="left:1636px;top:7.10px;font-size:14px;line-height:16.10px;font-weight:bold;color:#000;text-align:left;letter-spacing:0.1px;">0 Active Alarm</div><div class="a" style="left:1618px;top:32px;width:12px;height:12px;background:linear-gradient(#f4f4f4,#d0d0d0);box-sizing:border-box;border:1px solid #555"></div><div class="t" style="left:1635px;top:32.10px;font-size:14px;line-height:16.10px;font-weight:bold;color:#000;text-align:left;">Show Active Alarms</div><svg class="a" style="left:1793px;top:5px" width="14" height="16" viewBox="0 0 14 16">
<path d="M3.5,7 V4.5 A3.5,3.5 0 0 1 10.5,4.5 V7" fill="none" stroke="#A08A40" stroke-width="1.8"/>
<rect x="1.5" y="7" width="11" height="8" rx="1" fill="#F2CC30" stroke="#B08A10" stroke-width="0.8"/></svg><div class="t" style="left:1812px;top:7.10px;font-size:14px;line-height:16.10px;font-weight:bold;color:#000;text-align:left;letter-spacing:0.25px;">Lock Screen</div><svg class="a" style="left:1792px;top:30px" width="16" height="16" viewBox="0 0 16 16">
<polygon points="8,2 14,1 14,15 8,14" fill="#8E98C8" stroke="#5a6090" stroke-width="0.8"/>
<polygon points="1,6 5,6 5,3.5 9,8 5,12.5 5,10 1,10" fill="#5DD040" stroke="#2a8020" stroke-width="0.8"/></svg><div class="t" style="left:1812px;top:32.10px;font-size:14px;line-height:16.10px;font-weight:bold;color:#000;text-align:left;letter-spacing:0.25px;">Logout</div><div class="a" style="left:126px;top:56px;width:1px;height:1022px;background:#111"></div><div class="a" style="left:8px;top:106px;width:119px;height:35px;box-sizing:border-box;border:1px solid #0a0a0a;border-radius:3px 0 0 3px;background:linear-gradient(100deg,#2C4766 0%,#45688C 40%,#6391BD 75%,#73B1E3 100%)"></div><div class="t" style="left:-533px;width:1200px;top:118.24px;font-size:12px;line-height:13.80px;font-weight:bold;color:#fff;text-align:center;">Overview</div><div class="a" style="left:8px;top:145px;width:119px;height:35px;box-sizing:border-box;border:1px solid #0a0a0a;border-radius:3px 0 0 3px;background:linear-gradient(100deg,#2C4766 0%,#45688C 40%,#6391BD 75%,#73B1E3 100%)"></div><div class="t" style="left:-533px;width:1200px;top:157.24px;font-size:12px;line-height:13.80px;font-weight:bold;color:#fff;text-align:center;">Navigation</div><div class="a" style="left:8px;top:184px;width:119px;height:35px;box-sizing:border-box;border:1px solid #0a0a0a;border-radius:3px 0 0 3px;background:linear-gradient(100deg,#2C4766 0%,#45688C 40%,#6391BD 75%,#73B1E3 100%)"></div><div class="t" style="left:-533px;width:1200px;top:196.24px;font-size:12px;line-height:13.80px;font-weight:bold;color:#fff;text-align:center;">Flow Data</div><div class="a" style="left:8px;top:223px;width:119px;height:35px;box-sizing:border-box;border:1px solid #0a0a0a;border-radius:3px 0 0 3px;background:linear-gradient(100deg,#2C4766 0%,#45688C 40%,#6391BD 75%,#73B1E3 100%)"></div><div class="t" style="left:-533px;width:1200px;top:235.24px;font-size:12px;line-height:13.80px;font-weight:bold;color:#fff;text-align:center;">Historical Data</div><div class="a" style="left:8px;top:262px;width:119px;height:35px;box-sizing:border-box;border:1px solid #0a0a0a;border-radius:3px 0 0 3px;background:linear-gradient(100deg,#2C4766 0%,#45688C 40%,#6391BD 75%,#73B1E3 100%)"></div><div class="t" style="left:-533px;width:1200px;top:274.24px;font-size:12px;line-height:13.80px;font-weight:bold;color:#fff;text-align:center;">Alarms</div><div class="a" style="left:8px;top:301px;width:119px;height:35px;box-sizing:border-box;border:1px solid #0a0a0a;border-radius:3px 0 0 3px;background:linear-gradient(100deg,#2C4766 0%,#45688C 40%,#6391BD 75%,#73B1E3 100%)"></div><div class="t" style="left:-533px;width:1200px;top:313.24px;font-size:12px;line-height:13.80px;font-weight:bold;color:#fff;text-align:center;">Alarm History</div><div class="a" style="left:8px;top:340px;width:119px;height:35px;box-sizing:border-box;border:1px solid #0a0a0a;border-radius:3px 0 0 3px;background:linear-gradient(100deg,#2C4766 0%,#45688C 40%,#6391BD 75%,#73B1E3 100%)"></div><div class="t" style="left:-533px;width:1200px;top:352.24px;font-size:12px;line-height:13.80px;font-weight:bold;color:#fff;text-align:center;">Trends</div><div class="a" style="left:8px;top:379px;width:119px;height:35px;box-sizing:border-box;border:1px solid #0a0a0a;border-radius:3px 0 0 3px;background:linear-gradient(100deg,#2C4766 0%,#45688C 40%,#6391BD 75%,#73B1E3 100%)"></div><div class="t" style="left:-533px;width:1200px;top:391.24px;font-size:12px;line-height:13.80px;font-weight:bold;color:#fff;text-align:center;">Administration</div><div class="a" style="left:8px;top:418px;width:119px;height:35px;box-sizing:border-box;border:1px solid #0a0a0a;border-radius:3px 0 0 3px;background:linear-gradient(100deg,#2C4766 0%,#45688C 40%,#6391BD 75%,#73B1E3 100%)"></div><div class="t" style="left:-533px;width:1200px;top:430.24px;font-size:12px;line-height:13.80px;font-weight:bold;color:#fff;text-align:center;">SCADA Overview</div><div class="a" style="left:9px;top:888px;width:1px;height:98px;background:#000"></div><div class="a" style="left:120px;top:888px;width:1px;height:98px;background:#000"></div><div class="a" style="left:9px;top:985px;width:112px;height:1px;background:#000"></div><div class="a" style="left:9px;top:881.00px;width:112px;height:15px;display:flex;align-items:center"><div style="flex:1;height:1px;background:#000"></div><span style="font-size:12.5px;line-height:15px;font-weight:bold;color:#000;white-space:pre;padding:0 4px;">Intrusion</span><div style="flex:1;height:1px;background:#000"></div></div><div class="a" style="left:17px;top:899.5px;width:14px;height:14px;border-radius:50%;background:radial-gradient(circle at 45% 40%,#333 0%,#000 60%)"></div><div class="t" style="left:36px;top:900.74px;font-size:12px;line-height:13.80px;font-weight:normal;color:#000;text-align:left;">CP-1</div><div class="a" style="left:17px;top:921.5px;width:14px;height:14px;border-radius:50%;background:radial-gradient(circle at 45% 40%,#333 0%,#000 60%)"></div><div class="t" style="left:36px;top:922.74px;font-size:12px;line-height:13.80px;font-weight:normal;color:#000;text-align:left;">ADMIN</div><div class="a" style="left:17px;top:943.5px;width:14px;height:14px;border-radius:50%;background:radial-gradient(circle at 45% 40%,#333 0%,#000 60%)"></div><div class="t" style="left:36px;top:944.74px;font-size:12px;line-height:13.80px;font-weight:normal;color:#000;text-align:left;">OPS BLDG</div><div class="a" style="left:13px;top:998px;width:103px;height:22px;background:#2B4561"></div><div class="t" style="left:-535.5px;width:1200px;top:1003.98px;font-size:11.2px;line-height:12.88px;font-weight:bold;color:#fff;text-align:center;">admin</div><div class="a" style="left:13px;top:1024px;width:103px;height:22px;background:#2B4561"></div><div class="t" style="left:-535.5px;width:1200px;top:1029.98px;font-size:11.2px;line-height:12.88px;font-weight:bold;color:#fff;text-align:center;">May 7, 2012</div><div class="a" style="left:13px;top:1050px;width:103px;height:22px;background:#2B4561"></div><div class="t" style="left:-535.5px;width:1200px;top:1055.98px;font-size:11.2px;line-height:12.88px;font-weight:bold;color:#fff;text-align:center;">1:13:00 PM</div><div class="a" style="left:127px;top:56px;width:1791px;height:35px;background:#fff;box-sizing:border-box;border-top:1px solid #111;border-bottom:1px solid #111"></div><div class="t" style="left:422px;width:1200px;top:64.01px;font-size:18px;line-height:20.70px;font-weight:bold;color:#000;text-align:center;">Influent Pump Station</div><div class="t" style="left:77.5px;width:1200px;top:197.80px;font-size:14px;line-height:16.10px;font-weight:bold;color:#000;text-align:center;letter-spacing:0.3px;">Influent Pump Station</div><div class="t" style="left:77.5px;width:1200px;top:217.50px;font-size:14px;line-height:16.10px;font-weight:bold;color:#000;text-align:center;letter-spacing:0.3px;">Discharge Flow</div><div class="a" style="left:630px;top:237px;width:97px;height:24px;background:#000;box-sizing:border-box;border:1px solid #666"></div><div class="t" style="left:125px;width:600px;top:242.86px;font-size:16px;line-height:18.40px;font-weight:normal;color:#fff;text-align:right;-webkit-text-stroke:0.35px #fff;">1.56 MGD</div><div class="t" style="left:81px;width:1200px;top:450.60px;font-size:14px;line-height:16.10px;font-weight:bold;color:#000;text-align:center;letter-spacing:0.3px;">Influent Pump Station</div><div class="t" style="left:81px;width:1200px;top:470.30px;font-size:14px;line-height:16.10px;font-weight:bold;color:#000;text-align:center;letter-spacing:0.3px;">Return Flow</div><div class="a" style="left:632px;top:490px;width:97px;height:24px;background:#000;box-sizing:border-box;border:1px solid #666"></div><div class="t" style="left:127px;width:600px;top:495.76px;font-size:16px;line-height:18.40px;font-weight:normal;color:#fff;text-align:right;-webkit-text-stroke:0.35px #fff;">0.20 MGD</div><div class="t" style="left:-29px;width:600px;top:534.30px;font-size:14px;line-height:16.10px;font-weight:bold;color:#0000C0;text-align:right;letter-spacing:0.3px;">Emergency</div><div class="t" style="left:-40px;width:600px;top:553.10px;font-size:14px;line-height:16.10px;font-weight:bold;color:#0000C0;text-align:right;letter-spacing:0.3px;">Basin</div><div class="t" style="left:-26px;width:600px;top:575.10px;font-size:14px;line-height:16.10px;font-weight:bold;color:#0000C0;text-align:right;letter-spacing:0.3px;">Equalization</div><div class="t" style="left:-59px;width:600px;top:592.60px;font-size:14px;line-height:16.10px;font-weight:bold;color:#0000C0;text-align:right;letter-spacing:0.3px;">Lagoons</div><div class="t" style="left:1251px;width:1200px;top:639.10px;font-size:14px;line-height:16.10px;font-weight:bold;color:#0000B0;text-align:center;letter-spacing:0.2px;">From Headworks</div><div class="t" style="left:1251px;width:1200px;top:658.10px;font-size:14px;line-height:16.10px;font-weight:bold;color:#0000B0;text-align:center;letter-spacing:0.2px;">Screening</div><div class="t" style="left:1013px;width:1200px;top:527.40px;font-size:14px;line-height:16.10px;font-weight:bold;color:#000;text-align:center;letter-spacing:0.3px;">Influent Pump</div><div class="t" style="left:1013px;width:1200px;top:547.10px;font-size:14px;line-height:16.10px;font-weight:bold;color:#000;text-align:center;letter-spacing:0.3px;">Station Level</div><div class="a" style="left:1564px;top:566px;width:96px;height:24px;background:#000;box-sizing:border-box;border:1px solid #555"></div><div class="t" style="left:1058px;width:600px;top:571.76px;font-size:16px;line-height:18.40px;font-weight:normal;color:#fff;text-align:right;-webkit-text-stroke:0.35px #fff;">8.0 FT</div><div class="a" style="left:1273px;top:225px;width:1px;height:39px;background:#000"></div><div class="a" style="left:1516px;top:225px;width:1px;height:39px;background:#000"></div><div class="a" style="left:1273px;top:263px;width:244px;height:1px;background:#000"></div><div class="a" style="left:1273px;top:218.50px;width:244px;height:14px;display:flex;align-items:center"><div style="width:4px;height:1px;background:#000"></div><span style="font-size:12px;line-height:14px;font-weight:bold;color:#000;white-space:pre;padding:0 2px 0 1px;letter-spacing:-0.1px;">Lead Pump Assignment</span><div style="flex:1;height:1px;background:#000"></div></div><div class="a" style="left:1277px;top:238px;width:235px;height:23px;background:#fff;box-sizing:border-box;border:1px solid #222"></div><div class="t" style="left:909px;width:600px;top:241.33px;font-size:17px;line-height:19.55px;font-weight:normal;color:#000;text-align:right;letter-spacing:0.35px;-webkit-text-stroke:0.35px #000;">Lead Pump is Pump # 1</div><div class="a" style="left:1273px;top:271px;width:1px;height:39px;background:#000"></div><div class="a" style="left:1516px;top:271px;width:1px;height:39px;background:#000"></div><div class="a" style="left:1273px;top:309px;width:244px;height:1px;background:#000"></div><div class="a" style="left:1273px;top:264.50px;width:244px;height:14px;display:flex;align-items:center"><div style="width:4px;height:1px;background:#000"></div><span style="font-size:12px;line-height:14px;font-weight:bold;color:#000;white-space:pre;padding:0 2px 0 1px;letter-spacing:-0.1px;">Lag Pump Assignment</span><div style="flex:1;height:1px;background:#000"></div></div><div class="a" style="left:1277px;top:284px;width:235px;height:23px;background:#fff;box-sizing:border-box;border:1px solid #222"></div><div class="t" style="left:909px;width:600px;top:287.33px;font-size:17px;line-height:19.55px;font-weight:normal;color:#000;text-align:right;letter-spacing:0.35px;-webkit-text-stroke:0.35px #000;">Lag Pump is Pump # 2</div><div class="a" style="left:1273px;top:317px;width:1px;height:39px;background:#000"></div><div class="a" style="left:1516px;top:317px;width:1px;height:39px;background:#000"></div><div class="a" style="left:1273px;top:355px;width:244px;height:1px;background:#000"></div><div class="a" style="left:1273px;top:310.50px;width:244px;height:14px;display:flex;align-items:center"><div style="width:4px;height:1px;background:#000"></div><span style="font-size:12px;line-height:14px;font-weight:bold;color:#000;white-space:pre;padding:0 2px 0 1px;letter-spacing:-0.1px;">Standby Pump Assignment</span><div style="flex:1;height:1px;background:#000"></div></div><div class="a" style="left:1277px;top:330px;width:235px;height:23px;background:#fff;box-sizing:border-box;border:1px solid #222"></div><div class="t" style="left:909px;width:600px;top:333.33px;font-size:17px;line-height:19.55px;font-weight:normal;color:#000;text-align:right;letter-spacing:0.35px;-webkit-text-stroke:0.35px #000;">Standby Pump is Pump # 3</div><div class="a" style="left:1273px;top:415px;width:1px;height:39px;background:#000"></div><div class="a" style="left:1516px;top:415px;width:1px;height:39px;background:#000"></div><div class="a" style="left:1273px;top:453px;width:244px;height:1px;background:#000"></div><div class="a" style="left:1273px;top:408.50px;width:244px;height:14px;display:flex;align-items:center"><div style="width:4px;height:1px;background:#000"></div><span style="font-size:12px;line-height:14px;font-weight:bold;color:#000;white-space:pre;padding:0 2px 0 1px;letter-spacing:-0.1px;">Lead Pump Start Setpoint</span><div style="flex:1;height:1px;background:#000"></div></div><div class="a" style="left:1277px;top:428px;width:235px;height:23px;background:#fff;box-sizing:border-box;border:1px solid #222"></div><div class="t" style="left:909px;width:600px;top:431.33px;font-size:17px;line-height:19.55px;font-weight:normal;color:#000;text-align:right;letter-spacing:0.35px;-webkit-text-stroke:0.35px #000;">10.0 ft</div><div class="a" style="left:1273px;top:461px;width:1px;height:39px;background:#000"></div><div class="a" style="left:1516px;top:461px;width:1px;height:39px;background:#000"></div><div class="a" style="left:1273px;top:499px;width:244px;height:1px;background:#000"></div><div class="a" style="left:1273px;top:454.50px;width:244px;height:14px;display:flex;align-items:center"><div style="width:4px;height:1px;background:#000"></div><span style="font-size:12px;line-height:14px;font-weight:bold;color:#000;white-space:pre;padding:0 2px 0 1px;letter-spacing:-0.1px;">Auto Level Setpoint</span><div style="flex:1;height:1px;background:#000"></div></div><div class="a" style="left:1277px;top:474px;width:235px;height:23px;background:#fff;box-sizing:border-box;border:1px solid #222"></div><div class="t" style="left:909px;width:600px;top:477.33px;font-size:17px;line-height:19.55px;font-weight:normal;color:#000;text-align:right;letter-spacing:0.35px;-webkit-text-stroke:0.35px #000;">8.0 ft</div><div class="a" style="left:1273px;top:507px;width:1px;height:39px;background:#000"></div><div class="a" style="left:1516px;top:507px;width:1px;height:39px;background:#000"></div><div class="a" style="left:1273px;top:545px;width:244px;height:1px;background:#000"></div><div class="a" style="left:1273px;top:500.50px;width:244px;height:14px;display:flex;align-items:center"><div style="width:4px;height:1px;background:#000"></div><span style="font-size:12px;line-height:14px;font-weight:bold;color:#000;white-space:pre;padding:0 2px 0 1px;letter-spacing:-0.1px;">Lead Pump Stop Setpoint</span><div style="flex:1;height:1px;background:#000"></div></div><div class="a" style="left:1277px;top:520px;width:235px;height:23px;background:#fff;box-sizing:border-box;border:1px solid #222"></div><div class="t" style="left:909px;width:600px;top:523.33px;font-size:17px;line-height:19.55px;font-weight:normal;color:#000;text-align:right;letter-spacing:0.35px;-webkit-text-stroke:0.35px #000;">6.0 ft</div><div class="a" style="left:1273px;top:553px;width:1px;height:60px;background:#000"></div><div class="a" style="left:1516px;top:553px;width:1px;height:60px;background:#000"></div><div class="a" style="left:1273px;top:612px;width:244px;height:1px;background:#000"></div><div class="a" style="left:1273px;top:546.50px;width:244px;height:14px;display:flex;align-items:center"><div style="width:4px;height:1px;background:#000"></div><span style="font-size:12px;line-height:14px;font-weight:bold;color:#000;white-space:pre;padding:0 2px 0 1px;letter-spacing:-0.1px;">Lag Pump Call Setpoints</span><div style="flex:1;height:1px;background:#000"></div></div><div class="a" style="left:1277px;top:571px;width:1px;height:40px;background:#000"></div><div class="a" style="left:1394px;top:571px;width:1px;height:40px;background:#000"></div><div class="a" style="left:1277px;top:610px;width:118px;height:1px;background:#000"></div><div class="a" style="left:1277px;top:564.50px;width:118px;height:14px;display:flex;align-items:center"><div style="flex:1;height:1px;background:#000"></div><span style="font-size:12px;line-height:14px;font-weight:bold;color:#000;white-space:pre;padding:0 2px 0 1px;">Start</span><div style="flex:1;height:1px;background:#000"></div></div><div class="a" style="left:1282px;top:583px;width:108px;height:24px;background:#fff;box-sizing:border-box;border:1px solid #222"></div><div class="t" style="left:787px;width:600px;top:587.33px;font-size:17px;line-height:19.55px;font-weight:normal;color:#000;text-align:right;-webkit-text-stroke:0.35px #000;">98 %</div><div class="a" style="left:1395px;top:571px;width:1px;height:40px;background:#000"></div><div class="a" style="left:1512px;top:571px;width:1px;height:40px;background:#000"></div><div class="a" style="left:1395px;top:610px;width:118px;height:1px;background:#000"></div><div class="a" style="left:1395px;top:564.50px;width:118px;height:14px;display:flex;align-items:center"><div style="flex:1;height:1px;background:#000"></div><span style="font-size:12px;line-height:14px;font-weight:bold;color:#000;white-space:pre;padding:0 2px 0 1px;">Stop</span><div style="flex:1;height:1px;background:#000"></div></div><div class="a" style="left:1399px;top:583px;width:109px;height:24px;background:#fff;box-sizing:border-box;border:1px solid #222"></div><div class="t" style="left:905px;width:600px;top:587.33px;font-size:17px;line-height:19.55px;font-weight:normal;color:#000;text-align:right;-webkit-text-stroke:0.35px #000;">70 %</div><div class="a" style="left:1273px;top:621px;width:1px;height:62px;background:#000"></div><div class="a" style="left:1516px;top:621px;width:1px;height:62px;background:#000"></div><div class="a" style="left:1273px;top:682px;width:244px;height:1px;background:#000"></div><div class="a" style="left:1273px;top:614.50px;width:244px;height:14px;display:flex;align-items:center"><div style="width:4px;height:1px;background:#000"></div><span style="font-size:12px;line-height:14px;font-weight:bold;color:#000;white-space:pre;padding:0 2px 0 1px;letter-spacing:-0.1px;">Lag Pump Call</span><div style="flex:1;height:1px;background:#000"></div></div><div class="a" style="left:1277px;top:640px;width:1px;height:38px;background:#000"></div><div class="a" style="left:1394px;top:640px;width:1px;height:38px;background:#000"></div><div class="a" style="left:1277px;top:677px;width:118px;height:1px;background:#000"></div><div class="a" style="left:1277px;top:633.50px;width:118px;height:14px;display:flex;align-items:center"><div style="width:4px;height:1px;background:#000"></div><span style="font-size:12px;line-height:14px;font-weight:bold;color:#000;white-space:pre;padding:0 2px 0 1px;">Time Delay</span><div style="flex:1;height:1px;background:#000"></div></div><div class="a" style="left:1282px;top:651px;width:108px;height:24px;background:#fff;box-sizing:border-box;border:1px solid #222"></div><div class="t" style="left:787px;width:600px;top:655.33px;font-size:17px;line-height:19.55px;font-weight:normal;color:#000;text-align:right;-webkit-text-stroke:0.35px #000;">60 secs</div><div class="a" style="left:1395px;top:640px;width:1px;height:38px;background:#000"></div><div class="a" style="left:1512px;top:640px;width:1px;height:38px;background:#000"></div><div class="a" style="left:1395px;top:677px;width:118px;height:1px;background:#000"></div><div class="a" style="left:1395px;top:633.50px;width:118px;height:14px;display:flex;align-items:center"><div style="width:4px;height:1px;background:#000"></div><span style="font-size:12px;line-height:14px;font-weight:bold;color:#000;white-space:pre;padding:0 2px 0 1px;">Accum. Time</span><div style="flex:1;height:1px;background:#000"></div></div><div class="a" style="left:1399px;top:651px;width:109px;height:24px;background:#000;box-sizing:border-box;border:1px solid #666"></div><div class="t" style="left:905px;width:600px;top:655.83px;font-size:17px;line-height:19.55px;font-weight:normal;color:#fff;text-align:right;-webkit-text-stroke:0.35px #fff;">0 secs</div><div class="a" style="left:1273px;top:691px;width:1px;height:62px;background:#000"></div><div class="a" style="left:1516px;top:691px;width:1px;height:62px;background:#000"></div><div class="a" style="left:1273px;top:752px;width:244px;height:1px;background:#000"></div><div class="a" style="left:1273px;top:684.50px;width:244px;height:14px;display:flex;align-items:center"><div style="width:4px;height:1px;background:#000"></div><span style="font-size:12px;line-height:14px;font-weight:bold;color:#000;white-space:pre;padding:0 2px 0 1px;letter-spacing:-0.1px;">Lag Pump Stop</span><div style="flex:1;height:1px;background:#000"></div></div><div class="a" style="left:1277px;top:710px;width:1px;height:38px;background:#000"></div><div class="a" style="left:1394px;top:710px;width:1px;height:38px;background:#000"></div><div class="a" style="left:1277px;top:747px;width:118px;height:1px;background:#000"></div><div class="a" style="left:1277px;top:703.50px;width:118px;height:14px;display:flex;align-items:center"><div style="width:4px;height:1px;background:#000"></div><span style="font-size:12px;line-height:14px;font-weight:bold;color:#000;white-space:pre;padding:0 2px 0 1px;">Time Delay</span><div style="flex:1;height:1px;background:#000"></div></div><div class="a" style="left:1282px;top:721px;width:108px;height:24px;background:#fff;box-sizing:border-box;border:1px solid #222"></div><div class="t" style="left:787px;width:600px;top:725.33px;font-size:17px;line-height:19.55px;font-weight:normal;color:#000;text-align:right;-webkit-text-stroke:0.35px #000;">60 secs</div><div class="a" style="left:1395px;top:710px;width:1px;height:38px;background:#000"></div><div class="a" style="left:1512px;top:710px;width:1px;height:38px;background:#000"></div><div class="a" style="left:1395px;top:747px;width:118px;height:1px;background:#000"></div><div class="a" style="left:1395px;top:703.50px;width:118px;height:14px;display:flex;align-items:center"><div style="width:4px;height:1px;background:#000"></div><span style="font-size:12px;line-height:14px;font-weight:bold;color:#000;white-space:pre;padding:0 2px 0 1px;">Accum. Time</span><div style="flex:1;height:1px;background:#000"></div></div><div class="a" style="left:1399px;top:721px;width:109px;height:24px;background:#000;box-sizing:border-box;border:1px solid #666"></div><div class="t" style="left:905px;width:600px;top:725.83px;font-size:17px;line-height:19.55px;font-weight:normal;color:#fff;text-align:right;-webkit-text-stroke:0.35px #fff;">0 secs</div><div class="a" style="left:1581px;top:415px;width:1px;height:44px;background:#000"></div><div class="a" style="left:1767px;top:415px;width:1px;height:44px;background:#000"></div><div class="a" style="left:1581px;top:458px;width:187px;height:1px;background:#000"></div><div class="a" style="left:1581px;top:408.50px;width:187px;height:14px;display:flex;align-items:center"><div style="width:4px;height:1px;background:#000"></div><span style="font-size:12px;line-height:14px;font-weight:bold;color:#000;white-space:pre;padding:0 2px 0 1px;">Level Hi Hi</span><div style="flex:1;height:1px;background:#000"></div></div><div class="a" style="left:1584px;top:426px;width:180px;height:29px;background:#000;box-sizing:border-box;border:1px solid #333"></div><div class="t" style="left:1074.0px;width:1200px;top:434.10px;font-size:14px;line-height:16.10px;font-weight:bold;color:#fff;text-align:center;">Normal</div><div class="a" style="left:1581px;top:779px;width:1px;height:44px;background:#000"></div><div class="a" style="left:1767px;top:779px;width:1px;height:44px;background:#000"></div><div class="a" style="left:1581px;top:822px;width:187px;height:1px;background:#000"></div><div class="a" style="left:1581px;top:772.50px;width:187px;height:14px;display:flex;align-items:center"><div style="width:4px;height:1px;background:#000"></div><span style="font-size:12px;line-height:14px;font-weight:bold;color:#000;white-space:pre;padding:0 2px 0 1px;">Level Lo Lo</span><div style="flex:1;height:1px;background:#000"></div></div><div class="a" style="left:1584px;top:790px;width:180px;height:29px;background:#000;box-sizing:border-box;border:1px solid #333"></div><div class="t" style="left:1074.0px;width:1200px;top:798.10px;font-size:14px;line-height:16.10px;font-weight:bold;color:#fff;text-align:center;">Normal</div><div class="a" style="left:945px;top:851px;width:97px;height:24px;background:#00AA00;box-sizing:border-box;border:1px solid #0a3a0a"></div><div class="t" style="left:393.5px;width:1200px;top:856.60px;font-size:14px;line-height:16.10px;font-weight:bold;color:#111;text-align:center;letter-spacing:0.3px;">LEAD</div><div class="a" style="left:945px;top:877px;width:97px;height:25px;background:#DD0000;box-sizing:border-box;border:1px solid #3a0000"></div><div class="t" style="left:393.5px;width:1200px;top:883.10px;font-size:14px;line-height:16.10px;font-weight:bold;color:#1a0000;text-align:center;letter-spacing:0.6px;">STOPPED</div><div class="a" style="left:945px;top:904px;width:97px;height:24px;background:#00AA00;box-sizing:border-box;border:1px solid #0a3a0a"></div><div class="t" style="left:393.5px;width:1200px;top:909.60px;font-size:14px;line-height:16.10px;font-weight:bold;color:#111;text-align:center;letter-spacing:0.3px;">AUTO</div><div class="a" style="left:945px;top:931px;width:97px;height:24px;background:#000;box-sizing:border-box;border:1px solid #666"></div><div class="t" style="left:440px;width:600px;top:936.33px;font-size:17px;line-height:19.55px;font-weight:normal;color:#fff;text-align:right;letter-spacing:0.5px;-webkit-text-stroke:0.35px #fff;">0 %</div><div class="t" style="left:393.5px;width:1200px;top:960.10px;font-size:14px;line-height:16.10px;font-weight:bold;color:#111;text-align:center;letter-spacing:0.4px;">Influent</div><div class="t" style="left:393.5px;width:1200px;top:979.10px;font-size:14px;line-height:16.10px;font-weight:bold;color:#111;text-align:center;letter-spacing:0.4px;">Pump 1</div><div class="a" style="left:1064px;top:851px;width:97px;height:24px;background:#00AA00;box-sizing:border-box;border:1px solid #0a3a0a"></div><div class="t" style="left:512.5px;width:1200px;top:856.60px;font-size:14px;line-height:16.10px;font-weight:bold;color:#111;text-align:center;letter-spacing:0.3px;">LAG</div><div class="a" style="left:1064px;top:877px;width:97px;height:25px;background:#DD0000;box-sizing:border-box;border:1px solid #3a0000"></div><div class="t" style="left:512.5px;width:1200px;top:883.10px;font-size:14px;line-height:16.10px;font-weight:bold;color:#1a0000;text-align:center;letter-spacing:0.6px;">STOPPED</div><div class="a" style="left:1064px;top:904px;width:97px;height:24px;background:#00AA00;box-sizing:border-box;border:1px solid #0a3a0a"></div><div class="t" style="left:512.5px;width:1200px;top:909.60px;font-size:14px;line-height:16.10px;font-weight:bold;color:#111;text-align:center;letter-spacing:0.3px;">AUTO</div><div class="a" style="left:1064px;top:931px;width:97px;height:24px;background:#000;box-sizing:border-box;border:1px solid #666"></div><div class="t" style="left:559px;width:600px;top:936.33px;font-size:17px;line-height:19.55px;font-weight:normal;color:#fff;text-align:right;letter-spacing:0.5px;-webkit-text-stroke:0.35px #fff;">0 %</div><div class="t" style="left:513px;width:1200px;top:960.10px;font-size:14px;line-height:16.10px;font-weight:bold;color:#111;text-align:center;letter-spacing:0.4px;">Influent</div><div class="t" style="left:513px;width:1200px;top:979.10px;font-size:14px;line-height:16.10px;font-weight:bold;color:#111;text-align:center;letter-spacing:0.4px;">Pump 2</div><div class="a" style="left:1184px;top:851px;width:97px;height:24px;background:#00AA00;box-sizing:border-box;border:1px solid #0a3a0a"></div><div class="t" style="left:632.5px;width:1200px;top:856.60px;font-size:14px;line-height:16.10px;font-weight:bold;color:#111;text-align:center;letter-spacing:0.3px;">STANDBY</div><div class="a" style="left:1184px;top:877px;width:97px;height:25px;background:#DD0000;box-sizing:border-box;border:1px solid #3a0000"></div><div class="t" style="left:632.5px;width:1200px;top:883.10px;font-size:14px;line-height:16.10px;font-weight:bold;color:#1a0000;text-align:center;letter-spacing:0.6px;">STOPPED</div><div class="a" style="left:1184px;top:904px;width:97px;height:24px;background:#00AA00;box-sizing:border-box;border:1px solid #0a3a0a"></div><div class="t" style="left:632.5px;width:1200px;top:909.60px;font-size:14px;line-height:16.10px;font-weight:bold;color:#111;text-align:center;letter-spacing:0.3px;">AUTO</div><div class="a" style="left:1184px;top:931px;width:97px;height:24px;background:#000;box-sizing:border-box;border:1px solid #666"></div><div class="t" style="left:679px;width:600px;top:936.33px;font-size:17px;line-height:19.55px;font-weight:normal;color:#fff;text-align:right;letter-spacing:0.5px;-webkit-text-stroke:0.35px #fff;">0 %</div><div class="t" style="left:632.5px;width:1200px;top:960.10px;font-size:14px;line-height:16.10px;font-weight:bold;color:#111;text-align:center;letter-spacing:0.4px;">Influent</div><div class="t" style="left:632.5px;width:1200px;top:979.10px;font-size:14px;line-height:16.10px;font-weight:bold;color:#111;text-align:center;letter-spacing:0.4px;">Pump 3</div><div class="a" style="left:625px;top:807px;width:1px;height:66px;background:#000"></div><div class="a" style="left:866px;top:807px;width:1px;height:66px;background:#000"></div><div class="a" style="left:625px;top:872px;width:242px;height:1px;background:#000"></div><div class="a" style="left:625px;top:800.50px;width:242px;height:14px;display:flex;align-items:center"><div style="width:4px;height:1px;background:#000"></div><span style="font-size:12px;line-height:14px;font-weight:bold;color:#000;white-space:pre;padding:0 2px 0 1px;letter-spacing:-0.1px;">Pump Call Status</span><div style="flex:1;height:1px;background:#000"></div></div><div class="t" style="left:632px;top:823.60px;font-size:14px;line-height:16.10px;font-weight:bold;color:#111;text-align:left;letter-spacing:0.3px;">Lead Pump</div><div class="a" style="left:719px;top:818px;width:144px;height:24px;background:#000;box-sizing:border-box;border:1px solid #333"></div><div class="t" style="left:191.0px;width:1200px;top:824.10px;font-size:14px;line-height:16.10px;font-weight:bold;color:#fff;text-align:center;letter-spacing:0.3px;">OFF</div><div class="t" style="left:636px;top:850.60px;font-size:14px;line-height:16.10px;font-weight:bold;color:#111;text-align:left;letter-spacing:0.3px;">Lag Pump</div><div class="a" style="left:719px;top:845px;width:144px;height:24px;background:#000;box-sizing:border-box;border:1px solid #333"></div><div class="t" style="left:191.0px;width:1200px;top:851.10px;font-size:14px;line-height:16.10px;font-weight:bold;color:#fff;text-align:center;letter-spacing:0.3px;">OFF</div><div class="a" style="left:755px;top:911px;width:1px;height:44px;background:#000"></div><div class="a" style="left:941px;top:911px;width:1px;height:44px;background:#000"></div><div class="a" style="left:755px;top:954px;width:187px;height:1px;background:#000"></div><div class="a" style="left:755px;top:904.50px;width:187px;height:14px;display:flex;align-items:center"><div style="width:4px;height:1px;background:#000"></div><span style="font-size:12px;line-height:14px;font-weight:bold;color:#000;white-space:pre;padding:0 2px 0 1px;letter-spacing:-0.1px;">Lo Lo Level Override</span><div style="flex:1;height:1px;background:#000"></div></div><div class="a" style="left:759px;top:922px;width:179px;height:29px;background:#000;box-sizing:border-box;border:1px solid #333"></div><div class="t" style="left:248.5px;width:1200px;top:930.10px;font-size:14px;line-height:16.10px;font-weight:bold;color:#fff;text-align:center;letter-spacing:0.3px;">Normal</div><div class="a" style="left:306px;top:784px;width:1px;height:246px;background:#000"></div><div class="a" style="left:555px;top:784px;width:1px;height:246px;background:#000"></div><div class="a" style="left:306px;top:1029px;width:250px;height:1px;background:#000"></div><div class="a" style="left:306px;top:777.50px;width:250px;height:14px;display:flex;align-items:center"><div style="width:4px;height:1px;background:#000"></div><span style="font-size:12px;line-height:14px;font-weight:bold;color:#000;white-space:pre;padding:0 2px 0 1px;letter-spacing:-0.1px;">Influent Pumps Control</span><div style="flex:1;height:1px;background:#000"></div></div><div class="a" style="left:310px;top:802px;width:1px;height:38px;background:#000"></div><div class="a" style="left:551px;top:802px;width:1px;height:38px;background:#000"></div><div class="a" style="left:310px;top:839px;width:242px;height:1px;background:#000"></div><div class="a" style="left:310px;top:795.50px;width:242px;height:14px;display:flex;align-items:center"><div style="width:4px;height:1px;background:#000"></div><span style="font-size:12px;line-height:14px;font-weight:bold;color:#000;white-space:pre;padding:0 2px 0 1px;letter-spacing:-0.1px;">PID Control Terms</span><div style="flex:1;height:1px;background:#000"></div></div><div class="a" style="left:314px;top:813px;width:76px;height:24px;background:#fff;box-sizing:border-box;border:1px solid #222"></div><div class="t" style="left:-248.0px;width:1200px;top:817.76px;font-size:16px;line-height:18.40px;font-weight:normal;color:#000;text-align:center;-webkit-text-stroke:0.35px #000;">P =1.0</div><div class="a" style="left:392px;top:813px;width:76px;height:24px;background:#fff;box-sizing:border-box;border:1px solid #222"></div><div class="t" style="left:-170.0px;width:1200px;top:817.76px;font-size:16px;line-height:18.40px;font-weight:normal;color:#000;text-align:center;-webkit-text-stroke:0.35px #000;">I =0.1</div><div class="a" style="left:471px;top:813px;width:76px;height:24px;background:#fff;box-sizing:border-box;border:1px solid #222"></div><div class="t" style="left:-91.0px;width:1200px;top:817.76px;font-size:16px;line-height:18.40px;font-weight:normal;color:#000;text-align:center;-webkit-text-stroke:0.35px #000;">D =0.0</div><div class="a" style="left:310px;top:848px;width:1px;height:60px;background:#000"></div><div class="a" style="left:551px;top:848px;width:1px;height:60px;background:#000"></div><div class="a" style="left:310px;top:907px;width:242px;height:1px;background:#000"></div><div class="a" style="left:310px;top:841.50px;width:242px;height:14px;display:flex;align-items:center"><div style="width:4px;height:1px;background:#000"></div><span style="font-size:12px;line-height:14px;font-weight:bold;color:#000;white-space:pre;padding:0 2px 0 1px;letter-spacing:-0.1px;">PID PV &amp; CV Values</span><div style="flex:1;height:1px;background:#000"></div></div><div class="a" style="left:313px;top:866px;width:1px;height:38px;background:#000"></div><div class="a" style="left:429px;top:866px;width:1px;height:38px;background:#000"></div><div class="a" style="left:313px;top:903px;width:117px;height:1px;background:#000"></div><div class="a" style="left:313px;top:859.50px;width:117px;height:14px;display:flex;align-items:center"><div style="flex:1;height:1px;background:#000"></div><span style="font-size:12px;line-height:14px;font-weight:bold;color:#000;white-space:pre;padding:0 2px 0 1px;">PV</span><div style="flex:1;height:1px;background:#000"></div></div><div class="a" style="left:317px;top:877px;width:109px;height:25px;background:#000;box-sizing:border-box;border:1px solid #666"></div><div class="t" style="left:-176px;width:600px;top:883.26px;font-size:16px;line-height:18.40px;font-weight:normal;color:#fff;text-align:right;-webkit-text-stroke:0.35px #fff;">8.0 FT</div><div class="a" style="left:433px;top:866px;width:1px;height:38px;background:#000"></div><div class="a" style="left:548px;top:866px;width:1px;height:38px;background:#000"></div><div class="a" style="left:433px;top:903px;width:116px;height:1px;background:#000"></div><div class="a" style="left:433px;top:859.50px;width:116px;height:14px;display:flex;align-items:center"><div style="flex:1;height:1px;background:#000"></div><span style="font-size:12px;line-height:14px;font-weight:bold;color:#000;white-space:pre;padding:0 2px 0 1px;">CV</span><div style="flex:1;height:1px;background:#000"></div></div><div class="a" style="left:436px;top:877px;width:108px;height:25px;background:#000;box-sizing:border-box;border:1px solid #666"></div><div class="t" style="left:-58px;width:600px;top:883.26px;font-size:16px;line-height:18.40px;font-weight:normal;color:#fff;text-align:right;-webkit-text-stroke:0.35px #fff;">5 %</div><div class="a" style="left:310px;top:916px;width:1px;height:57px;background:#000"></div><div class="a" style="left:551px;top:916px;width:1px;height:57px;background:#000"></div><div class="a" style="left:310px;top:972px;width:242px;height:1px;background:#000"></div><div class="a" style="left:310px;top:909.50px;width:242px;height:14px;display:flex;align-items:center"><div style="width:4px;height:1px;background:#000"></div><span style="font-size:12px;line-height:14px;font-weight:bold;color:#000;white-space:pre;padding:0 2px 0 1px;letter-spacing:-0.1px;">Influent Pumps PID Mode</span><div style="flex:1;height:1px;background:#000"></div></div><div class="a" style="left:313px;top:929px;width:235px;height:40px;box-sizing:border-box;border:1px solid #8a5a28;border-radius:3px;background:linear-gradient(#FFA62E 0%,#F59018 50%,#E07A08 100%)"></div><div class="t" style="left:-169.5px;width:1200px;top:943.60px;font-size:14px;line-height:16.10px;font-weight:bold;color:#111;text-align:center;">SWITCH TO MANUAL MODE</div><div class="a" style="left:310px;top:981px;width:1px;height:45px;background:#000"></div><div class="a" style="left:551px;top:981px;width:1px;height:45px;background:#000"></div><div class="a" style="left:310px;top:1025px;width:242px;height:1px;background:#000"></div><div class="a" style="left:310px;top:974.50px;width:242px;height:14px;display:flex;align-items:center"><div style="width:4px;height:1px;background:#000"></div><span style="font-size:12px;line-height:14px;font-weight:bold;color:#000;white-space:pre;padding:0 2px 0 1px;letter-spacing:-0.1px;">Current PID Mode</span><div style="flex:1;height:1px;background:#000"></div></div><div class="a" style="left:316px;top:993px;width:231px;height:29px;background:#00AA00;box-sizing:border-box;border:1px solid #0a3a0a"></div><div class="t" style="left:-168.5px;width:1200px;top:999.26px;font-size:16px;line-height:18.40px;font-weight:normal;color:#111;text-align:center;-webkit-text-stroke:0.35px #111;">AUTO</div><div class="a" style="left:1306px;top:884px;width:1px;height:58px;background:#000"></div><div class="a" style="left:1548px;top:884px;width:1px;height:58px;background:#000"></div><div class="a" style="left:1306px;top:941px;width:243px;height:1px;background:#000"></div><div class="a" style="left:1306px;top:877.50px;width:243px;height:14px;display:flex;align-items:center"><div style="width:4px;height:1px;background:#000"></div><span style="font-size:12px;line-height:14px;font-weight:bold;color:#000;white-space:pre;padding:0 2px 0 1px;letter-spacing:-0.1px;">Pump Rotation Enable/Disable</span><div style="flex:1;height:1px;background:#000"></div></div><div class="a" style="left:1310px;top:898px;width:235px;height:40px;box-sizing:border-box;border:1px solid #0a4a0a;border-radius:3px;background:linear-gradient(#1CB81C 0%,#0C960C 45%,#067006 100%)"></div><div class="t" style="left:827.5px;width:1200px;top:912.10px;font-size:14px;line-height:16.10px;font-weight:bold;color:#0a140a;text-align:center;">PUMP ROTATION ENABLED</div><div class="a" style="left:1306px;top:949px;width:1px;height:39px;background:#000"></div><div class="a" style="left:1548px;top:949px;width:1px;height:39px;background:#000"></div><div class="a" style="left:1306px;top:987px;width:243px;height:1px;background:#000"></div><div class="a" style="left:1306px;top:942.50px;width:243px;height:14px;display:flex;align-items:center"><div style="width:4px;height:1px;background:#000"></div><span style="font-size:12px;line-height:14px;font-weight:bold;color:#000;white-space:pre;padding:0 2px 0 1px;letter-spacing:-0.1px;">Lead Pump Rotation Time</span><div style="flex:1;height:1px;background:#000"></div></div><div class="a" style="left:1310px;top:961px;width:234px;height:24px;background:#fff;box-sizing:border-box;border:1px solid #222"></div><div class="t" style="left:941px;width:600px;top:965.83px;font-size:17px;line-height:19.55px;font-weight:normal;color:#000;text-align:right;letter-spacing:0.3px;-webkit-text-stroke:0.35px #000;">48 hours</div><div class="a" style="left:1306px;top:995px;width:1px;height:39px;background:#000"></div><div class="a" style="left:1548px;top:995px;width:1px;height:39px;background:#000"></div><div class="a" style="left:1306px;top:1033px;width:243px;height:1px;background:#000"></div><div class="a" style="left:1306px;top:988.50px;width:243px;height:14px;display:flex;align-items:center"><div style="width:4px;height:1px;background:#000"></div><span style="font-size:12px;line-height:14px;font-weight:bold;color:#000;white-space:pre;padding:0 2px 0 1px;letter-spacing:-0.1px;">Current Lead Pump Runtime</span><div style="flex:1;height:1px;background:#000"></div></div><div class="a" style="left:1310px;top:1007px;width:234px;height:24px;background:#000;box-sizing:border-box;border:1px solid #666"></div><div class="t" style="left:941px;width:600px;top:1012.33px;font-size:17px;line-height:19.55px;font-weight:normal;color:#fff;text-align:right;letter-spacing:0.3px;-webkit-text-stroke:0.35px #fff;">0.0 hours</div><div class="a" style="left:1556px;top:884px;width:1px;height:58px;background:#000"></div><div class="a" style="left:1798px;top:884px;width:1px;height:58px;background:#000"></div><div class="a" style="left:1556px;top:941px;width:243px;height:1px;background:#000"></div><div class="a" style="left:1556px;top:877.50px;width:243px;height:14px;display:flex;align-items:center"><div style="width:4px;height:1px;background:#000"></div><span style="font-size:12px;line-height:14px;font-weight:bold;color:#000;white-space:pre;padding:0 2px 0 1px;letter-spacing:-0.1px;">Clean Wetwell Cycle</span><div style="flex:1;height:1px;background:#000"></div></div><div class="a" style="left:1560px;top:898px;width:168px;height:40px;box-sizing:border-box;border:1px solid #0a4a0a;background:linear-gradient(#1CB81C 0%,#0C960C 45%,#067006 100%)"></div><div class="t" style="left:1044px;width:1200px;top:911.60px;font-size:14px;line-height:16.10px;font-weight:bold;color:#0a140a;text-align:center;letter-spacing:0.4px;">Clean Wetwell Trigger</div><div class="a" style="left:1730px;top:898px;width:65px;height:40px;box-sizing:border-box;border:1px solid #4a0a0a;background:linear-gradient(#F01818 0%,#D80808 50%,#B00404 100%)"></div><div class="t" style="left:1162.5px;width:1200px;top:911.60px;font-size:14px;line-height:16.10px;font-weight:bold;color:#1a0505;text-align:center;letter-spacing:0.6px;">Reset</div><div class="a" style="left:1556px;top:949px;width:1px;height:39px;background:#000"></div><div class="a" style="left:1798px;top:949px;width:1px;height:39px;background:#000"></div><div class="a" style="left:1556px;top:987px;width:243px;height:1px;background:#000"></div><div class="a" style="left:1556px;top:942.50px;width:243px;height:14px;display:flex;align-items:center"><div style="width:4px;height:1px;background:#000"></div><span style="font-size:12px;line-height:14px;font-weight:bold;color:#000;white-space:pre;padding:0 2px 0 1px;letter-spacing:-0.1px;">Wetwell Clean Cycle Timeout</span><div style="flex:1;height:1px;background:#000"></div></div><div class="a" style="left:1560px;top:961px;width:117px;height:24px;background:#fff;box-sizing:border-box;border:1px solid #222"></div><div class="t" style="left:1074px;width:600px;top:965.83px;font-size:17px;line-height:19.55px;font-weight:normal;color:#000;text-align:right;letter-spacing:0.3px;-webkit-text-stroke:0.35px #000;">120 mins</div><div class="a" style="left:1680px;top:961px;width:114px;height:24px;background:#000;box-sizing:border-box;border:1px solid #666"></div><div class="t" style="left:1191px;width:600px;top:966.33px;font-size:17px;line-height:19.55px;font-weight:normal;color:#fff;text-align:right;letter-spacing:0.3px;-webkit-text-stroke:0.35px #fff;">0 mins</div><div class="a" style="left:1556px;top:995px;width:1px;height:60px;background:#000"></div><div class="a" style="left:1798px;top:995px;width:1px;height:60px;background:#000"></div><div class="a" style="left:1556px;top:1054px;width:243px;height:1px;background:#000"></div><div class="a" style="left:1556px;top:988.50px;width:243px;height:14px;display:flex;align-items:center"><div style="width:4px;height:1px;background:#000"></div><span style="font-size:12px;line-height:14px;font-weight:bold;color:#000;white-space:pre;padding:0 2px 0 1px;letter-spacing:-0.1px;">Wetwell Clean Cycle Current</span><div style="flex:1;height:1px;background:#000"></div></div><div class="a" style="left:1560px;top:1013px;width:1px;height:39px;background:#000"></div><div class="a" style="left:1676px;top:1013px;width:1px;height:39px;background:#000"></div><div class="a" style="left:1560px;top:1051px;width:117px;height:1px;background:#000"></div><div class="a" style="left:1560px;top:1006.50px;width:117px;height:14px;display:flex;align-items:center"><div style="flex:1;height:1px;background:#000"></div><span style="font-size:12px;line-height:14px;font-weight:bold;color:#000;white-space:pre;padding:0 2px 0 1px;">Pump 1 Amps</span><div style="flex:1;height:1px;background:#000"></div></div><div class="a" style="left:1564px;top:1025px;width:108px;height:24px;background:#000;box-sizing:border-box;border:1px solid #666"></div><div class="t" style="left:1070px;width:600px;top:1030.33px;font-size:17px;line-height:19.55px;font-weight:normal;color:#fff;text-align:right;letter-spacing:0.3px;-webkit-text-stroke:0.35px #fff;">3.8 Amps</div><div class="a" style="left:1677px;top:1013px;width:1px;height:39px;background:#000"></div><div class="a" style="left:1793px;top:1013px;width:1px;height:39px;background:#000"></div><div class="a" style="left:1677px;top:1051px;width:117px;height:1px;background:#000"></div><div class="a" style="left:1677px;top:1006.50px;width:117px;height:14px;display:flex;align-items:center"><div style="flex:1;height:1px;background:#000"></div><span style="font-size:12px;line-height:14px;font-weight:bold;color:#000;white-space:pre;padding:0 2px 0 1px;">Stop SP</span><div style="flex:1;height:1px;background:#000"></div></div><div class="a" style="left:1681px;top:1025px;width:108px;height:24px;background:#fff;box-sizing:border-box;border:1px solid #222"></div><div class="t" style="left:1187px;width:600px;top:1029.33px;font-size:17px;line-height:19.55px;font-weight:normal;color:#000;text-align:right;letter-spacing:0.3px;-webkit-text-stroke:0.35px #000;">5.0 Amps</div><div class="a" style="left:126px;top:56px;width:399px;height:550px;box-sizing:border-box;border:1px solid #2a2f33;background:linear-gradient(90deg,#5d666d 0px,#7b858c 3px,#707a82 6px)"></div><div class="a" style="left:127px;top:57px;width:397px;height:22px;background:linear-gradient(#9aa2a8 0%,#8a9399 50%,#79828a 100%)"></div><svg class="a" style="left:127px;top:57px" width="397" height="22">
<g stroke="#a4abb0" stroke-width="1">
<line x1="31" y1="6.5" x2="115" y2="6.5"/><line x1="31" y1="9.5" x2="115" y2="9.5"/><line x1="31" y1="12.5" x2="115" y2="12.5"/><line x1="31" y1="15.5" x2="115" y2="15.5"/>
<line x1="281" y1="6.5" x2="366" y2="6.5"/><line x1="281" y1="9.5" x2="366" y2="9.5"/><line x1="281" y1="12.5" x2="366" y2="12.5"/><line x1="281" y1="15.5" x2="366" y2="15.5"/>
</g>
<g stroke="#7b848b" stroke-width="1">
<line x1="31" y1="7.5" x2="115" y2="7.5"/><line x1="31" y1="10.5" x2="115" y2="10.5"/><line x1="31" y1="13.5" x2="115" y2="13.5"/><line x1="31" y1="16.5" x2="115" y2="16.5"/>
<line x1="281" y1="7.5" x2="366" y2="7.5"/><line x1="281" y1="10.5" x2="366" y2="10.5"/><line x1="281" y1="13.5" x2="366" y2="13.5"/><line x1="281" y1="16.5" x2="366" y2="16.5"/>
</g>
</svg><div class="a" style="left:134px;top:60px;width:15px;height:15px;box-sizing:border-box;border:2px solid #5a6369;border-top-width:3px;background:#fff"></div><svg class="a" style="left:500px;top:60px" width="16" height="16" viewBox="0 0 16 16">
<rect x="0.5" y="0.5" width="15" height="15" fill="#B84A3A" stroke="#7a2a20"/>
<path d="M4,4 L12,12 M12,4 L4,12" stroke="#fff" stroke-width="2.6"/></svg><div class="t" style="left:-275px;width:1200px;top:62.94px;font-size:12px;line-height:13.80px;font-weight:bold;color:#111;text-align:center;">Influent Pump 1 (PMP1211)</div><div class="a" style="left:131px;top:79px;width:390px;height:523px;background:#ECEBE7;box-sizing:border-box;border-left:1px solid #fafafa;border-top:1px solid #fafafa"></div><div class="a" style="left:137px;top:95px;width:1px;height:193px;background:#000"></div><div class="a" style="left:513px;top:95px;width:1px;height:193px;background:#000"></div><div class="a" style="left:137px;top:287px;width:377px;height:1px;background:#000"></div><div class="a" style="left:137px;top:88.50px;width:377px;height:14px;display:flex;align-items:center"><div style="width:4px;height:1px;background:#000"></div><span style="font-size:12px;line-height:14px;font-weight:bold;color:#000;white-space:pre;padding:0 2px 0 1px;">Status Indicators</span><div style="flex:1;height:1px;background:#000"></div></div><div class="a" style="left:141px;top:115px;width:1px;height:36px;background:#000"></div><div class="a" style="left:323px;top:115px;width:1px;height:36px;background:#000"></div><div class="a" style="left:141px;top:150px;width:183px;height:1px;background:#000"></div><div class="a" style="left:141px;top:108.50px;width:183px;height:14px;display:flex;align-items:center"><div style="width:4px;height:1px;background:#000"></div><span style="font-size:12px;line-height:14px;font-weight:normal;color:#000;white-space:pre;padding:0 2px 0 1px;">Current State</span><div style="flex:1;height:1px;background:#000"></div></div><div class="a" style="left:145px;top:124px;width:174px;height:24px;background:#DC0000;box-sizing:border-box;border:1px solid #4a0000"></div><div class="t" style="left:-368.0px;width:1200px;top:130.66px;font-size:11.3px;line-height:12.99px;font-weight:bold;color:#200000;text-align:center;">STOPPED</div><div class="a" style="left:328px;top:115px;width:1px;height:36px;background:#000"></div><div class="a" style="left:509px;top:115px;width:1px;height:36px;background:#000"></div><div class="a" style="left:328px;top:150px;width:182px;height:1px;background:#000"></div><div class="a" style="left:328px;top:108.50px;width:182px;height:14px;display:flex;align-items:center"><div style="width:4px;height:1px;background:#000"></div><span style="font-size:12px;line-height:14px;font-weight:normal;color:#000;white-space:pre;padding:0 2px 0 1px;">Current Remote Mode</span><div style="flex:1;height:1px;background:#000"></div></div><div class="a" style="left:332px;top:124px;width:174px;height:24px;background:#00A800;box-sizing:border-box;border:1px solid #003a00"></div><div class="t" style="left:-181.0px;width:1200px;top:130.66px;font-size:11.3px;line-height:12.99px;font-weight:bold;color:#002000;text-align:center;">AUTO</div><div class="a" style="left:141px;top:159px;width:1px;height:36px;background:#000"></div><div class="a" style="left:509px;top:159px;width:1px;height:36px;background:#000"></div><div class="a" style="left:141px;top:194px;width:369px;height:1px;background:#000"></div><div class="a" style="left:141px;top:152.50px;width:369px;height:14px;display:flex;align-items:center"><div style="width:4px;height:1px;background:#000"></div><span style="font-size:12px;line-height:14px;font-weight:normal;color:#000;white-space:pre;padding:0 2px 0 1px;">Fault Status</span><div style="flex:1;height:1px;background:#000"></div></div><div class="a" style="left:145px;top:168px;width:362px;height:24px;background:#808080;box-sizing:border-box;border:1px solid #333"></div><div class="t" style="left:-274.0px;width:1200px;top:174.66px;font-size:11.3px;line-height:12.99px;font-weight:bold;color:#111;text-align:center;">DEVICE IS HEALTHY</div><div class="a" style="left:141px;top:203px;width:1px;height:36px;background:#000"></div><div class="a" style="left:509px;top:203px;width:1px;height:36px;background:#000"></div><div class="a" style="left:141px;top:238px;width:369px;height:1px;background:#000"></div><div class="a" style="left:141px;top:196.50px;width:369px;height:14px;display:flex;align-items:center"><div style="width:4px;height:1px;background:#000"></div><span style="font-size:12px;line-height:14px;font-weight:normal;color:#000;white-space:pre;padding:0 2px 0 1px;">Previous Fault Status</span><div style="flex:1;height:1px;background:#000"></div></div><div class="a" style="left:145px;top:212px;width:362px;height:24px;background:#808080;box-sizing:border-box;border:1px solid #333"></div><div class="t" style="left:-274.0px;width:1200px;top:218.66px;font-size:11.3px;line-height:12.99px;font-weight:bold;color:#111;text-align:center;">FAILED RUNNING</div><div class="a" style="left:141px;top:247px;width:1px;height:36px;background:#000"></div><div class="a" style="left:509px;top:247px;width:1px;height:36px;background:#000"></div><div class="a" style="left:141px;top:282px;width:369px;height:1px;background:#000"></div><div class="a" style="left:141px;top:240.50px;width:369px;height:14px;display:flex;align-items:center"><div style="width:4px;height:1px;background:#000"></div><span style="font-size:12px;line-height:14px;font-weight:normal;color:#000;white-space:pre;padding:0 2px 0 1px;">Interlock Status</span><div style="flex:1;height:1px;background:#000"></div></div><div class="a" style="left:145px;top:256px;width:362px;height:24px;background:#808080;box-sizing:border-box;border:1px solid #333"></div><div class="t" style="left:-274.0px;width:1200px;top:262.66px;font-size:11.3px;line-height:12.99px;font-weight:bold;color:#111;text-align:center;">ALL DEVICE INTERLOCKS HEALTHY</div><div class="a" style="left:136px;top:301px;width:1px;height:129px;background:#000"></div><div class="a" style="left:514px;top:301px;width:1px;height:129px;background:#000"></div><div class="a" style="left:136px;top:429px;width:379px;height:1px;background:#000"></div><div class="a" style="left:136px;top:294.50px;width:379px;height:14px;display:flex;align-items:center"><div style="width:4px;height:1px;background:#000"></div><span style="font-size:12px;line-height:14px;font-weight:bold;color:#000;white-space:pre;padding:0 2px 0 1px;">Control and Feedback</span><div style="flex:1;height:1px;background:#000"></div></div><div class="a" style="left:140px;top:320px;width:1px;height:30px;background:#000"></div><div class="a" style="left:321px;top:320px;width:1px;height:30px;background:#000"></div><div class="a" style="left:140px;top:349px;width:182px;height:1px;background:#000"></div><div class="a" style="left:140px;top:313.50px;width:182px;height:14px;display:flex;align-items:center"><div style="width:4px;height:1px;background:#000"></div><span style="font-size:12px;line-height:14px;font-weight:normal;color:#000;white-space:pre;padding:0 2px 0 1px;">PLC Speed Command</span><div style="flex:1;height:1px;background:#000"></div></div><div class="a" style="left:143px;top:328px;width:176px;height:19px;background:#000;box-sizing:border-box;border:2px solid #777;border-top-color:#555;border-left-color:#555"></div><div class="t" style="left:-283px;width:600px;top:331.98px;font-size:12.5px;line-height:14.37px;font-weight:bold;color:#fff;text-align:right;letter-spacing:0.6px;">100 <span style="font-weight:normal;font-size:11px">%</span></div><div class="a" style="left:140px;top:358px;width:1px;height:30px;background:#000"></div><div class="a" style="left:321px;top:358px;width:1px;height:30px;background:#000"></div><div class="a" style="left:140px;top:387px;width:182px;height:1px;background:#000"></div><div class="a" style="left:140px;top:351.50px;width:182px;height:14px;display:flex;align-items:center"><div style="width:4px;height:1px;background:#000"></div><span style="font-size:12px;line-height:14px;font-weight:normal;color:#000;white-space:pre;padding:0 2px 0 1px;">Speed Feedback</span><div style="flex:1;height:1px;background:#000"></div></div><div class="a" style="left:143px;top:366px;width:176px;height:19px;background:#000;box-sizing:border-box;border:2px solid #777;border-top-color:#555;border-left-color:#555"></div><div class="t" style="left:-283px;width:600px;top:369.98px;font-size:12.5px;line-height:14.37px;font-weight:bold;color:#fff;text-align:right;letter-spacing:0.6px;">0 <span style="font-weight:normal;font-size:11px">%</span></div><div class="a" style="left:140px;top:396px;width:1px;height:30px;background:#000"></div><div class="a" style="left:321px;top:396px;width:1px;height:30px;background:#000"></div><div class="a" style="left:140px;top:425px;width:182px;height:1px;background:#000"></div><div class="a" style="left:140px;top:389.50px;width:182px;height:14px;display:flex;align-items:center"><div style="width:4px;height:1px;background:#000"></div><span style="font-size:12px;line-height:14px;font-weight:normal;color:#000;white-space:pre;padding:0 2px 0 1px;">Manual Speed Command</span><div style="flex:1;height:1px;background:#000"></div></div><div class="a" style="left:143px;top:404px;width:176px;height:19px;background:#fff;box-sizing:border-box;border:2px solid #222"></div><div class="t" style="left:-283px;width:600px;top:407.98px;font-size:12.5px;line-height:14.37px;font-weight:bold;color:#000;text-align:right;letter-spacing:0.6px;">5 <span style="font-weight:normal;font-size:11px">%</span></div><div class="t" style="left:-179.5px;width:1200px;top:313.58px;font-size:13.8px;line-height:15.87px;font-weight:bold;color:#0000AA;text-align:center;">FOR MANUAL CONTROL</div><div class="t" style="left:-179.5px;width:1200px;top:326.78px;font-size:13.8px;line-height:15.87px;font-weight:bold;color:#0000AA;text-align:center;">PLACE DEVICE INTO</div><div class="t" style="left:-179.5px;width:1200px;top:339.98px;font-size:13.8px;line-height:15.87px;font-weight:bold;color:#0000AA;text-align:center;">MANUAL MODE</div><div class="a" style="left:336px;top:358px;width:170px;height:31px;box-sizing:border-box;border:1px solid #333;background:linear-gradient(#ffffff 0%,#f6f5f2 50%,#d6d5d2 100%)"></div><div class="t" style="left:-179px;width:1200px;top:369.09px;font-size:11.3px;line-height:12.99px;font-weight:bold;color:#000;text-align:center;">RESET DEVICE FAULTS</div><div class="a" style="left:336px;top:395px;width:170px;height:31px;box-sizing:border-box;border:1px solid #8a5a28;border-radius:3px;background:linear-gradient(#FFA62E 0%,#F59018 50%,#E07A08 100%)"></div><div class="t" style="left:-179px;width:1200px;top:405.49px;font-size:11.4px;line-height:13.11px;font-weight:bold;color:#111;text-align:center;">SWITCH TO MANUAL MODE</div><div class="a" style="left:136px;top:444px;width:1px;height:115px;background:#000"></div><div class="a" style="left:513px;top:444px;width:1px;height:115px;background:#000"></div><div class="a" style="left:136px;top:558px;width:378px;height:1px;background:#000"></div><div class="a" style="left:136px;top:444px;width:4px;height:1px;background:#000"></div><div class="a" style="left:510px;top:444px;width:4px;height:1px;background:#000"></div><div class="t" style="left:142px;top:439.44px;font-size:12px;line-height:13.80px;font-weight:bold;color:#000;text-align:left;">Alarm Delay/Disable Control</div><div class="t" style="left:-208px;width:1200px;top:439.44px;font-size:12px;line-height:13.80px;font-weight:bold;color:#000;text-align:center;">Delay</div><div class="t" style="left:422.5px;top:439.99px;font-size:11.4px;line-height:13.11px;font-weight:bold;color:#000;text-align:left;">Disable Control</div><div class="t" style="left:143.5px;top:457.94px;font-size:12px;line-height:13.80px;font-weight:normal;color:#111;text-align:left;letter-spacing:0.15px;">Common Fail</div><div class="t" style="left:-207.5px;width:1200px;top:458.86px;font-size:11px;line-height:12.65px;font-weight:normal;color:#111;text-align:center;">N/A</div><div class="a" style="left:431px;top:455.5px;width:74px;height:16.0px;box-sizing:border-box;border:1px solid #0a4a0a;border-radius:3px;background:linear-gradient(#2AAE2A 0%,#139313 45%,#0B760B 100%)"></div><div class="t" style="left:-132px;width:1200px;top:458.88px;font-size:11.2px;line-height:12.88px;font-weight:bold;color:#0a1a0a;text-align:center;letter-spacing:0.15px;">ENABLED</div><div class="t" style="left:143.5px;top:477.94px;font-size:12px;line-height:13.80px;font-weight:normal;color:#111;text-align:left;letter-spacing:0.15px;">Failed to Start</div><div class="a" style="left:367px;top:476px;width:54px;height:16px;background:#fff;box-sizing:border-box;border:1.5px solid #111"></div><div class="t" style="left:-182px;width:600px;top:478.52px;font-size:13px;line-height:14.95px;font-weight:bold;color:#000;text-align:right;letter-spacing:0.3px;">5 s</div><div class="a" style="left:431px;top:475.5px;width:74px;height:16.0px;box-sizing:border-box;border:1px solid #0a4a0a;border-radius:3px;background:linear-gradient(#2AAE2A 0%,#139313 45%,#0B760B 100%)"></div><div class="t" style="left:-132px;width:1200px;top:478.88px;font-size:11.2px;line-height:12.88px;font-weight:bold;color:#0a1a0a;text-align:center;letter-spacing:0.15px;">ENABLED</div><div class="t" style="left:143.5px;top:497.94px;font-size:12px;line-height:13.80px;font-weight:normal;color:#111;text-align:left;letter-spacing:0.15px;">Failed to Stop</div><div class="a" style="left:367px;top:496px;width:54px;height:16px;background:#fff;box-sizing:border-box;border:1.5px solid #111"></div><div class="t" style="left:-182px;width:600px;top:498.52px;font-size:13px;line-height:14.95px;font-weight:bold;color:#000;text-align:right;letter-spacing:0.3px;">120 s</div><div class="a" style="left:431px;top:495.5px;width:74px;height:16.0px;box-sizing:border-box;border:1px solid #0a4a0a;border-radius:3px;background:linear-gradient(#2AAE2A 0%,#139313 45%,#0B760B 100%)"></div><div class="t" style="left:-132px;width:1200px;top:498.88px;font-size:11.2px;line-height:12.88px;font-weight:bold;color:#0a1a0a;text-align:center;letter-spacing:0.15px;">ENABLED</div><div class="t" style="left:143.5px;top:517.94px;font-size:12px;line-height:13.80px;font-weight:normal;color:#111;text-align:left;letter-spacing:0.15px;">Failed Running</div><div class="t" style="left:-207.5px;width:1200px;top:518.86px;font-size:11px;line-height:12.65px;font-weight:normal;color:#111;text-align:center;">N/A</div><div class="a" style="left:431px;top:515.5px;width:74px;height:16.0px;box-sizing:border-box;border:1px solid #0a4a0a;border-radius:3px;background:linear-gradient(#2AAE2A 0%,#139313 45%,#0B760B 100%)"></div><div class="t" style="left:-132px;width:1200px;top:518.88px;font-size:11.2px;line-height:12.88px;font-weight:bold;color:#0a1a0a;text-align:center;letter-spacing:0.15px;">ENABLED</div><div class="t" style="left:143.5px;top:537.94px;font-size:12px;line-height:13.80px;font-weight:normal;color:#111;text-align:left;letter-spacing:0.15px;">Failed to Achieve Speed</div><div class="a" style="left:367px;top:536px;width:54px;height:16px;background:#fff;box-sizing:border-box;border:1.5px solid #111"></div><div class="t" style="left:-182px;width:600px;top:538.52px;font-size:13px;line-height:14.95px;font-weight:bold;color:#000;text-align:right;letter-spacing:0.3px;">120 s</div><div class="a" style="left:431px;top:535.5px;width:74px;height:16.0px;box-sizing:border-box;border:1px solid #0a4a0a;border-radius:3px;background:linear-gradient(#2AAE2A 0%,#139313 45%,#0B760B 100%)"></div><div class="t" style="left:-132px;width:1200px;top:538.88px;font-size:11.2px;line-height:12.88px;font-weight:bold;color:#0a1a0a;text-align:center;letter-spacing:0.15px;">ENABLED</div><div class="a" style="left:135px;top:568px;width:112px;height:29px;box-sizing:border-box;border:1px solid #777;border-radius:3px;background:linear-gradient(#ffffff 0%,#f4f3f0 55%,#dcdbd8 100%)"></div><div class="a" style="left:269px;top:568px;width:112px;height:29px;box-sizing:border-box;border:1px solid #777;border-radius:3px;background:linear-gradient(#ffffff 0%,#f4f3f0 55%,#dcdbd8 100%)"></div><div class="a" style="left:404px;top:568px;width:112px;height:29px;box-sizing:border-box;border:1px solid #777;border-radius:3px;background:linear-gradient(#ffffff 0%,#f4f3f0 55%,#dcdbd8 100%)"></div><div class="t" style="left:-395.5px;width:1200px;top:576.48px;font-size:12.5px;line-height:14.37px;font-weight:bold;color:#111;text-align:center;">Interlocks</div><div class="t" style="left:-275px;width:1200px;top:576.48px;font-size:12.5px;line-height:14.37px;font-weight:bold;color:#111;text-align:center;">CLOSE</div><div class="t" style="left:-127px;width:1200px;top:576.48px;font-size:12.5px;line-height:14.37px;font-weight:bold;color:#111;text-align:center;">Runtimes</div><svg class="a" style="left:149px;top:570px" width="24" height="23" viewBox="0 0 28 26">
<line x1="8" y1="7" x2="20" y2="19" stroke="#7a7a7a" stroke-width="6.5" stroke-linecap="round"/>
<line x1="8" y1="7" x2="20" y2="19" stroke="#C4C4C4" stroke-width="4.2" stroke-linecap="round"/>
<circle cx="6.5" cy="5.5" r="5" fill="#C4C4C4" stroke="#7a7a7a" stroke-width="1.2"/>
<circle cx="21.5" cy="20.5" r="5" fill="#C4C4C4" stroke="#7a7a7a" stroke-width="1.2"/>
<rect x="2" y="-1" width="4" height="7" fill="#F4F3F0" transform="rotate(-45 4 3)"/>
<rect x="22" y="20" width="4" height="7" fill="#EAE9E6" transform="rotate(-45 24 23)"/>
</svg><svg class="a" style="left:419px;top:570px" width="24" height="24" viewBox="0 0 24 24">
<circle cx="12" cy="12" r="10.5" fill="#CFE3F7" stroke="#6E8FB0" stroke-width="1.5"/>
<circle cx="12" cy="12" r="8" fill="#E6F1FB"/>
<path d="M8,8 L12,13 L15,7" fill="none" stroke="#333" stroke-width="1.6"/></svg>
</body></html>
